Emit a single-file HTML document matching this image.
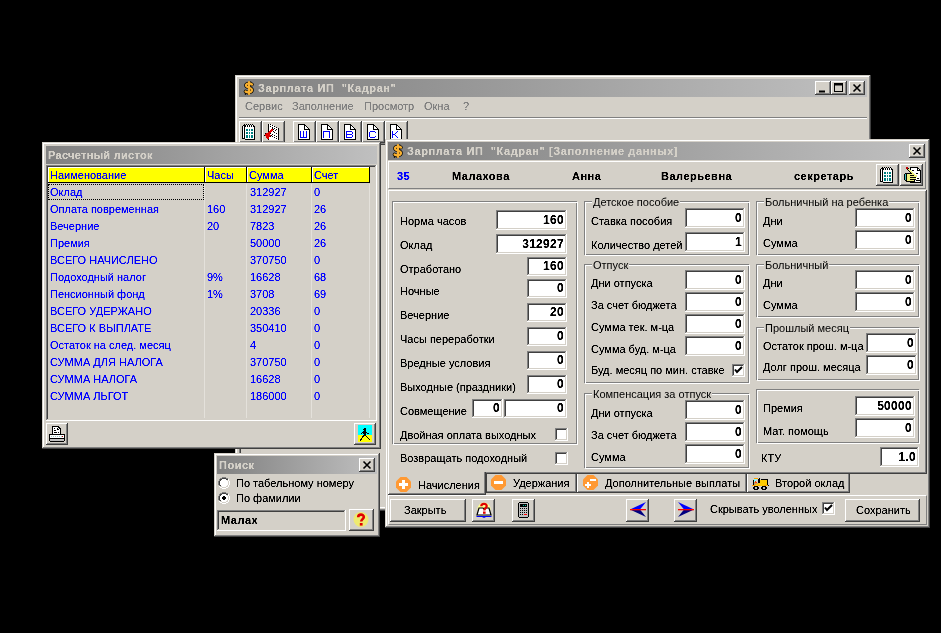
<!DOCTYPE html><html><head><meta charset="utf-8"><style>
*{margin:0;padding:0;box-sizing:border-box}
html,body{width:941px;height:633px;background:#000;overflow:hidden;position:relative}
body>div,body>svg{position:absolute}
.t,.tt{position:absolute;font-family:"Liberation Sans",sans-serif;font-size:11px;line-height:13px;white-space:nowrap;color:#000;filter:url(#crisp)}
.tt{font-weight:bold;color:#d4d0c8;letter-spacing:0.5px}
.blue{color:#0000ff}
.hb{color:#0000ff}
.win{background:#d4d0c8;box-shadow:inset -1px -1px #404040,inset 1px 1px #d4d0c8,inset -2px -2px #808080,inset 2px 2px #fff}
.dlg{background:#d4d0c8;box-shadow:inset -1px -1px #404040,inset 1px 1px #d4d0c8,inset -2px -2px #808080,inset 2px 2px #fff}
.title{background:linear-gradient(to right,#808080,#c0c0c0)}
.btn{background:#d4d0c8;box-shadow:inset -1px -1px #404040,inset 1px 1px #fff,inset -2px -2px #808080,inset 2px 2px #d4d0c8}
.edit{background:#fff;box-shadow:inset -1px -1px #fff,inset 1px 1px #808080,inset -2px -2px #d4d0c8,inset 2px 2px #404040}
.sunk{background:#d4d0c8;box-shadow:inset -1px -1px #fff,inset 1px 1px #808080,inset -2px -2px #d4d0c8,inset 2px 2px #404040}
.thin{border-top:1px solid #fff;border-left:1px solid #fff;border-right:1px solid #808080;border-bottom:1px solid #808080}
.tabp{box-shadow:inset -1px -1px #404040,inset 1px 1px #fff,inset -2px -2px #808080}
.tab{background:#d4d0c8;box-shadow:inset -1px -1px #404040,inset 1px 0 #fff,inset -2px -2px #808080}
.tabsel{background:#d4d0c8;box-shadow:inset -1px -1px #404040,inset 1px 0 #fff,inset -2px -2px #808080}
.grp1{border:1px solid #808080}
.grp2{border:1px solid #fff}
.hdr{background:#ffff00;box-shadow:inset -1px -1px #000,inset 1px 1px #fff}
.radio{width:12px;height:12px;border-radius:50%;background:#fff;box-shadow:inset 1px 1px #808080,inset -1px -1px #fff}
</style></head><body>
<svg width="0" height="0" style="position:absolute"><filter id="crisp"><feComponentTransfer><feFuncA type="linear" slope="2" intercept="-0.3"/></feComponentTransfer></filter></svg>
<div class="win" style="left:235px;top:75px;width:636px;height:436px"></div>
<div class="title" style="left:239px;top:79px;width:628px;height:18px"></div>
<svg style="left:241px;top:80px" width="16" height="16" viewBox="0 0 16 16"><path d="M9.5 1.5v2 M5 13.5 L4 14.5 M7 12.5v2" stroke="#000" stroke-width="1.6" fill="none"/><path d="M11 4.5 C9 3 5 3 5 5.5 C5 8 11 7 11 10 C11 12.5 6.5 13 4.5 11.5" stroke="#000" stroke-width="3.6" fill="none" stroke-linecap="round"/><path d="M11 4.5 C9 3 5 3 5 5.5 C5 8 11 7 11 10 C11 12.5 6.5 13 4.5 11.5 M8 2v12" stroke="#f8b030" stroke-width="2.2" fill="none" stroke-linecap="round"/></svg>
<div class="tt" style="left:258px;top:82px;letter-spacing:0.6px">Зарплата ИП&nbsp;&nbsp;"Кадран"</div>
<div class="btn" style="left:815px;top:81px;width:16px;height:14px"></div>
<svg style="left:815px;top:81px" width="16" height="14"><path d="M4 10.5h6" stroke="#000" stroke-width="2"/></svg>
<div class="btn" style="left:831px;top:81px;width:16px;height:14px"></div>
<svg style="left:831px;top:81px" width="16" height="14"><rect x="3.5" y="2.5" width="8" height="8" fill="none" stroke="#000"/><path d="M3 3.5h9" stroke="#000" stroke-width="2"/></svg>
<div class="btn" style="left:849px;top:81px;width:16px;height:14px"></div>
<svg style="left:849px;top:81px" width="16" height="14"><path d="M4.5 3.5 L11.5 10.5 M11.5 3.5 L4.5 10.5" stroke="#000" stroke-width="1.6"/></svg>
<div style="left:239px;top:143px;width:628px;height:365px;box-shadow:inset 1px 1px #808080,inset 2px 2px #404040,inset -1px -1px #fff,inset -2px -2px #d4d0c8"></div>
<div class="t" style="left:245px;top:100px;color:#808080">Сервис</div>
<div class="t" style="left:292px;top:100px;color:#808080">Заполнение</div>
<div class="t" style="left:364px;top:100px;color:#808080">Просмотр</div>
<div class="t" style="left:424px;top:100px;color:#808080">Окна</div>
<div class="t" style="left:463px;top:100px;color:#808080">?</div>
<div style="left:239px;top:117px;width:628px;height:1px;background:#808080"></div>
<div style="left:239px;top:118px;width:628px;height:1px;background:#fff"></div>
<div class="btn" style="left:239px;top:121px;width:23px;height:22px"></div>
<div class="btn" style="left:262px;top:121px;width:23px;height:22px"></div>
<div class="btn" style="left:293px;top:121px;width:23px;height:22px"></div>
<div class="btn" style="left:316px;top:121px;width:23px;height:22px"></div>
<div class="btn" style="left:339px;top:121px;width:23px;height:22px"></div>
<div class="btn" style="left:362px;top:121px;width:23px;height:22px"></div>
<div class="btn" style="left:385px;top:121px;width:23px;height:22px"></div>
<svg style="left:242px;top:124px" width="13" height="16" shape-rendering="crispEdges"><rect x="2" y="0" width="1" height="1" fill="#000"/><rect x="4" y="0" width="1" height="1" fill="#000"/><rect x="6" y="0" width="1" height="1" fill="#000"/><rect x="8" y="0" width="1" height="1" fill="#000"/><rect x="10" y="0" width="1" height="1" fill="#000"/><rect x="1" y="1" width="3" height="1" fill="#000"/><rect x="4" y="1" width="1" height="1" fill="#fff"/><rect x="5" y="1" width="1" height="1" fill="#000"/><rect x="6" y="1" width="1" height="1" fill="#fff"/><rect x="7" y="1" width="1" height="1" fill="#000"/><rect x="8" y="1" width="1" height="1" fill="#fff"/><rect x="9" y="1" width="1" height="1" fill="#000"/><rect x="10" y="1" width="1" height="1" fill="#fff"/><rect x="11" y="1" width="1" height="1" fill="#000"/><rect x="0" y="2" width="1" height="1" fill="#000"/><rect x="1" y="2" width="1" height="1" fill="#fff"/><rect x="2" y="2" width="2" height="1" fill="#000"/><rect x="4" y="2" width="1" height="1" fill="#fff"/><rect x="5" y="2" width="1" height="1" fill="#000"/><rect x="6" y="2" width="1" height="1" fill="#fff"/><rect x="7" y="2" width="1" height="1" fill="#000"/><rect x="8" y="2" width="1" height="1" fill="#fff"/><rect x="9" y="2" width="1" height="1" fill="#000"/><rect x="10" y="2" width="1" height="1" fill="#fff"/><rect x="11" y="2" width="2" height="1" fill="#000"/><rect x="0" y="3" width="1" height="1" fill="#000"/><rect x="1" y="3" width="1" height="1" fill="#fff"/><rect x="2" y="3" width="1" height="1" fill="#000"/><rect x="3" y="3" width="9" height="1" fill="#fff"/><rect x="12" y="3" width="1" height="1" fill="#000"/><rect x="0" y="4" width="1" height="1" fill="#000"/><rect x="1" y="4" width="1" height="1" fill="#fff"/><rect x="2" y="4" width="1" height="1" fill="#000"/><rect x="3" y="4" width="9" height="1" fill="#fff"/><rect x="12" y="4" width="1" height="1" fill="#000"/><rect x="0" y="5" width="1" height="1" fill="#000"/><rect x="1" y="5" width="1" height="1" fill="#fff"/><rect x="2" y="5" width="1" height="1" fill="#000"/><rect x="3" y="5" width="1" height="1" fill="#fff"/><rect x="4" y="5" width="2" height="1" fill="#008080"/><rect x="6" y="5" width="1" height="1" fill="#fff"/><rect x="7" y="5" width="1" height="1" fill="#008080"/><rect x="8" y="5" width="1" height="1" fill="#fff"/><rect x="9" y="5" width="2" height="1" fill="#008080"/><rect x="11" y="5" width="1" height="1" fill="#fff"/><rect x="12" y="5" width="1" height="1" fill="#000"/><rect x="0" y="6" width="1" height="1" fill="#000"/><rect x="1" y="6" width="1" height="1" fill="#fff"/><rect x="2" y="6" width="1" height="1" fill="#000"/><rect x="3" y="6" width="1" height="1" fill="#fff"/><rect x="4" y="6" width="2" height="1" fill="#008080"/><rect x="6" y="6" width="1" height="1" fill="#fff"/><rect x="7" y="6" width="1" height="1" fill="#008080"/><rect x="8" y="6" width="1" height="1" fill="#fff"/><rect x="9" y="6" width="2" height="1" fill="#008080"/><rect x="11" y="6" width="1" height="1" fill="#fff"/><rect x="12" y="6" width="1" height="1" fill="#000"/><rect x="0" y="7" width="1" height="1" fill="#000"/><rect x="1" y="7" width="1" height="1" fill="#fff"/><rect x="2" y="7" width="1" height="1" fill="#000"/><rect x="3" y="7" width="9" height="1" fill="#fff"/><rect x="12" y="7" width="1" height="1" fill="#000"/><rect x="0" y="8" width="1" height="1" fill="#000"/><rect x="1" y="8" width="1" height="1" fill="#fff"/><rect x="2" y="8" width="1" height="1" fill="#000"/><rect x="3" y="8" width="1" height="1" fill="#fff"/><rect x="4" y="8" width="2" height="1" fill="#008080"/><rect x="6" y="8" width="1" height="1" fill="#fff"/><rect x="7" y="8" width="1" height="1" fill="#008080"/><rect x="8" y="8" width="1" height="1" fill="#fff"/><rect x="9" y="8" width="2" height="1" fill="#008080"/><rect x="11" y="8" width="1" height="1" fill="#fff"/><rect x="12" y="8" width="1" height="1" fill="#000"/><rect x="0" y="9" width="1" height="1" fill="#000"/><rect x="1" y="9" width="1" height="1" fill="#fff"/><rect x="2" y="9" width="1" height="1" fill="#000"/><rect x="3" y="9" width="1" height="1" fill="#fff"/><rect x="4" y="9" width="2" height="1" fill="#008080"/><rect x="6" y="9" width="1" height="1" fill="#fff"/><rect x="7" y="9" width="1" height="1" fill="#008080"/><rect x="8" y="9" width="1" height="1" fill="#fff"/><rect x="9" y="9" width="2" height="1" fill="#008080"/><rect x="11" y="9" width="1" height="1" fill="#fff"/><rect x="12" y="9" width="1" height="1" fill="#000"/><rect x="0" y="10" width="1" height="1" fill="#000"/><rect x="1" y="10" width="1" height="1" fill="#fff"/><rect x="2" y="10" width="1" height="1" fill="#000"/><rect x="3" y="10" width="9" height="1" fill="#fff"/><rect x="12" y="10" width="1" height="1" fill="#000"/><rect x="0" y="11" width="1" height="1" fill="#000"/><rect x="1" y="11" width="1" height="1" fill="#fff"/><rect x="2" y="11" width="1" height="1" fill="#000"/><rect x="3" y="11" width="1" height="1" fill="#fff"/><rect x="4" y="11" width="2" height="1" fill="#008080"/><rect x="6" y="11" width="1" height="1" fill="#fff"/><rect x="7" y="11" width="1" height="1" fill="#008080"/><rect x="8" y="11" width="1" height="1" fill="#fff"/><rect x="9" y="11" width="2" height="1" fill="#008080"/><rect x="11" y="11" width="1" height="1" fill="#fff"/><rect x="12" y="11" width="1" height="1" fill="#000"/><rect x="0" y="12" width="1" height="1" fill="#000"/><rect x="1" y="12" width="1" height="1" fill="#fff"/><rect x="2" y="12" width="1" height="1" fill="#000"/><rect x="3" y="12" width="1" height="1" fill="#fff"/><rect x="4" y="12" width="2" height="1" fill="#008080"/><rect x="6" y="12" width="1" height="1" fill="#fff"/><rect x="7" y="12" width="1" height="1" fill="#008080"/><rect x="8" y="12" width="1" height="1" fill="#fff"/><rect x="9" y="12" width="2" height="1" fill="#008080"/><rect x="11" y="12" width="1" height="1" fill="#fff"/><rect x="12" y="12" width="1" height="1" fill="#000"/><rect x="0" y="13" width="1" height="1" fill="#000"/><rect x="1" y="13" width="1" height="1" fill="#fff"/><rect x="2" y="13" width="1" height="1" fill="#000"/><rect x="3" y="13" width="1" height="1" fill="#fff"/><rect x="4" y="13" width="2" height="1" fill="#008080"/><rect x="6" y="13" width="1" height="1" fill="#fff"/><rect x="7" y="13" width="1" height="1" fill="#008080"/><rect x="8" y="13" width="1" height="1" fill="#fff"/><rect x="9" y="13" width="2" height="1" fill="#008080"/><rect x="11" y="13" width="1" height="1" fill="#fff"/><rect x="12" y="13" width="1" height="1" fill="#000"/><rect x="0" y="14" width="3" height="1" fill="#000"/><rect x="3" y="14" width="9" height="1" fill="#fff"/><rect x="12" y="14" width="1" height="1" fill="#000"/><rect x="3" y="15" width="10" height="1" fill="#000"/></svg>
<svg style="left:263px;top:124px" width="17" height="16" shape-rendering="crispEdges"><path d="M6 0 L8 0 L15 4 L15 16 L6 16 Z" fill="#ffffff"/><rect x="5" y="0" width="1" height="10" fill="#000"/><rect x="15" y="4" width="1" height="12" fill="#000"/><rect x="7" y="0" width="1" height="1" fill="#000"/><rect x="9" y="1" width="1" height="1" fill="#000"/><rect x="11" y="2" width="1" height="1" fill="#000"/><rect x="13" y="3" width="1" height="1" fill="#000"/><rect x="7" y="2" width="1" height="1" fill="#000"/><rect x="9" y="3" width="1" height="1" fill="#000"/><rect x="11" y="4" width="1" height="1" fill="#000"/><rect x="13" y="5" width="1" height="1" fill="#000"/><rect x="8" y="5" width="1" height="1" fill="#000"/><rect x="11" y="8" width="1" height="1" fill="#000"/><rect x="13" y="9" width="1" height="1" fill="#000"/><rect x="9" y="10" width="1" height="1" fill="#000"/><rect x="11" y="11" width="1" height="1" fill="#000"/><rect x="13" y="12" width="1" height="1" fill="#000"/><rect x="9" y="12" width="1" height="1" fill="#000"/><rect x="11" y="13" width="1" height="1" fill="#000"/><rect x="13" y="14" width="1" height="1" fill="#000"/><rect x="10" y="7" width="1" height="1" fill="#000"/><rect x="12" y="6" width="1" height="1" fill="#000"/><rect x="8" y="5" width="2" height="1" fill="#e00000"/><rect x="7" y="6" width="3" height="1" fill="#e00000"/><rect x="6" y="7" width="3" height="1" fill="#e00000"/><rect x="5" y="8" width="3" height="1" fill="#e00000"/><rect x="3" y="9" width="5" height="1" fill="#e00000"/><rect x="2" y="10" width="5" height="1" fill="#e00000"/><rect x="2" y="11" width="6" height="1" fill="#e00000"/><rect x="3" y="12" width="4" height="1" fill="#e00000"/><rect x="3" y="13" width="3" height="1" fill="#e00000"/><rect x="4" y="14" width="2" height="1" fill="#e00000"/><rect x="9" y="4" width="1" height="1" fill="#000"/><rect x="10" y="5" width="1" height="1" fill="#000"/><rect x="2" y="9" width="1" height="1" fill="#000"/><rect x="1" y="11" width="1" height="1" fill="#000"/><rect x="5" y="15" width="1" height="1" fill="#000"/><rect x="7" y="12" width="1" height="1" fill="#000"/><rect x="8" y="11" width="1" height="1" fill="#000"/><rect x="7" y="9" width="1" height="1" fill="#000"/></svg>
<svg style="left:298px;top:124px" width="12" height="16" shape-rendering="crispEdges"><rect x="0" y="0" width="7" height="1" fill="#000"/><rect x="0" y="1" width="1" height="1" fill="#000"/><rect x="1" y="1" width="5" height="1" fill="#fff"/><rect x="6" y="1" width="2" height="1" fill="#000"/><rect x="0" y="2" width="1" height="1" fill="#000"/><rect x="1" y="2" width="5" height="1" fill="#fff"/><rect x="6" y="2" width="1" height="1" fill="#000"/><rect x="7" y="2" width="1" height="1" fill="#fff"/><rect x="8" y="2" width="1" height="1" fill="#000"/><rect x="0" y="3" width="1" height="1" fill="#000"/><rect x="1" y="3" width="5" height="1" fill="#fff"/><rect x="6" y="3" width="1" height="1" fill="#000"/><rect x="7" y="3" width="2" height="1" fill="#fff"/><rect x="9" y="3" width="1" height="1" fill="#000"/><rect x="0" y="4" width="1" height="1" fill="#000"/><rect x="1" y="4" width="5" height="1" fill="#fff"/><rect x="6" y="4" width="1" height="1" fill="#000"/><rect x="7" y="4" width="3" height="1" fill="#fff"/><rect x="10" y="4" width="1" height="1" fill="#000"/><rect x="0" y="5" width="1" height="1" fill="#000"/><rect x="1" y="5" width="5" height="1" fill="#fff"/><rect x="6" y="5" width="6" height="1" fill="#000"/><rect x="0" y="6" width="1" height="1" fill="#000"/><rect x="1" y="6" width="10" height="1" fill="#fff"/><rect x="11" y="6" width="1" height="1" fill="#000"/><rect x="0" y="7" width="1" height="1" fill="#000"/><rect x="1" y="7" width="1" height="1" fill="#fff"/><rect x="2" y="7" width="1" height="1" fill="#0000ff"/><rect x="3" y="7" width="2" height="1" fill="#fff"/><rect x="5" y="7" width="1" height="1" fill="#0000ff"/><rect x="6" y="7" width="2" height="1" fill="#fff"/><rect x="8" y="7" width="1" height="1" fill="#0000ff"/><rect x="9" y="7" width="2" height="1" fill="#fff"/><rect x="11" y="7" width="1" height="1" fill="#000"/><rect x="0" y="8" width="1" height="1" fill="#000"/><rect x="1" y="8" width="1" height="1" fill="#fff"/><rect x="2" y="8" width="1" height="1" fill="#0000ff"/><rect x="3" y="8" width="2" height="1" fill="#fff"/><rect x="5" y="8" width="1" height="1" fill="#0000ff"/><rect x="6" y="8" width="2" height="1" fill="#fff"/><rect x="8" y="8" width="1" height="1" fill="#0000ff"/><rect x="9" y="8" width="2" height="1" fill="#fff"/><rect x="11" y="8" width="1" height="1" fill="#000"/><rect x="0" y="9" width="1" height="1" fill="#000"/><rect x="1" y="9" width="1" height="1" fill="#fff"/><rect x="2" y="9" width="1" height="1" fill="#0000ff"/><rect x="3" y="9" width="2" height="1" fill="#fff"/><rect x="5" y="9" width="1" height="1" fill="#0000ff"/><rect x="6" y="9" width="2" height="1" fill="#fff"/><rect x="8" y="9" width="1" height="1" fill="#0000ff"/><rect x="9" y="9" width="2" height="1" fill="#fff"/><rect x="11" y="9" width="1" height="1" fill="#000"/><rect x="0" y="10" width="1" height="1" fill="#000"/><rect x="1" y="10" width="1" height="1" fill="#fff"/><rect x="2" y="10" width="1" height="1" fill="#0000ff"/><rect x="3" y="10" width="2" height="1" fill="#fff"/><rect x="5" y="10" width="1" height="1" fill="#0000ff"/><rect x="6" y="10" width="2" height="1" fill="#fff"/><rect x="8" y="10" width="1" height="1" fill="#0000ff"/><rect x="9" y="10" width="2" height="1" fill="#fff"/><rect x="11" y="10" width="1" height="1" fill="#000"/><rect x="0" y="11" width="1" height="1" fill="#000"/><rect x="1" y="11" width="1" height="1" fill="#fff"/><rect x="2" y="11" width="1" height="1" fill="#0000ff"/><rect x="3" y="11" width="2" height="1" fill="#fff"/><rect x="5" y="11" width="1" height="1" fill="#0000ff"/><rect x="6" y="11" width="2" height="1" fill="#fff"/><rect x="8" y="11" width="1" height="1" fill="#0000ff"/><rect x="9" y="11" width="2" height="1" fill="#fff"/><rect x="11" y="11" width="1" height="1" fill="#000"/><rect x="0" y="12" width="1" height="1" fill="#000"/><rect x="1" y="12" width="1" height="1" fill="#fff"/><rect x="2" y="12" width="1" height="1" fill="#0000ff"/><rect x="3" y="12" width="2" height="1" fill="#fff"/><rect x="5" y="12" width="1" height="1" fill="#0000ff"/><rect x="6" y="12" width="2" height="1" fill="#fff"/><rect x="8" y="12" width="1" height="1" fill="#0000ff"/><rect x="9" y="12" width="2" height="1" fill="#fff"/><rect x="11" y="12" width="1" height="1" fill="#000"/><rect x="0" y="13" width="1" height="1" fill="#000"/><rect x="1" y="13" width="1" height="1" fill="#fff"/><rect x="2" y="13" width="7" height="1" fill="#0000ff"/><rect x="9" y="13" width="2" height="1" fill="#fff"/><rect x="11" y="13" width="1" height="1" fill="#000"/><rect x="0" y="14" width="1" height="1" fill="#000"/><rect x="1" y="14" width="10" height="1" fill="#fff"/><rect x="11" y="14" width="1" height="1" fill="#000"/><rect x="0" y="15" width="12" height="1" fill="#000"/></svg>
<svg style="left:321px;top:124px" width="12" height="16" shape-rendering="crispEdges"><rect x="0" y="0" width="7" height="1" fill="#000"/><rect x="0" y="1" width="1" height="1" fill="#000"/><rect x="1" y="1" width="5" height="1" fill="#fff"/><rect x="6" y="1" width="2" height="1" fill="#000"/><rect x="0" y="2" width="1" height="1" fill="#000"/><rect x="1" y="2" width="5" height="1" fill="#fff"/><rect x="6" y="2" width="1" height="1" fill="#000"/><rect x="7" y="2" width="1" height="1" fill="#fff"/><rect x="8" y="2" width="1" height="1" fill="#000"/><rect x="0" y="3" width="1" height="1" fill="#000"/><rect x="1" y="3" width="5" height="1" fill="#fff"/><rect x="6" y="3" width="1" height="1" fill="#000"/><rect x="7" y="3" width="2" height="1" fill="#fff"/><rect x="9" y="3" width="1" height="1" fill="#000"/><rect x="0" y="4" width="1" height="1" fill="#000"/><rect x="1" y="4" width="5" height="1" fill="#fff"/><rect x="6" y="4" width="1" height="1" fill="#000"/><rect x="7" y="4" width="3" height="1" fill="#fff"/><rect x="10" y="4" width="1" height="1" fill="#000"/><rect x="0" y="5" width="1" height="1" fill="#000"/><rect x="1" y="5" width="5" height="1" fill="#fff"/><rect x="6" y="5" width="6" height="1" fill="#000"/><rect x="0" y="6" width="1" height="1" fill="#000"/><rect x="1" y="6" width="10" height="1" fill="#fff"/><rect x="11" y="6" width="1" height="1" fill="#000"/><rect x="0" y="7" width="1" height="1" fill="#000"/><rect x="1" y="7" width="1" height="1" fill="#fff"/><rect x="2" y="7" width="7" height="1" fill="#0000ff"/><rect x="9" y="7" width="2" height="1" fill="#fff"/><rect x="11" y="7" width="1" height="1" fill="#000"/><rect x="0" y="8" width="1" height="1" fill="#000"/><rect x="1" y="8" width="1" height="1" fill="#fff"/><rect x="2" y="8" width="1" height="1" fill="#0000ff"/><rect x="3" y="8" width="5" height="1" fill="#fff"/><rect x="8" y="8" width="1" height="1" fill="#0000ff"/><rect x="9" y="8" width="2" height="1" fill="#fff"/><rect x="11" y="8" width="1" height="1" fill="#000"/><rect x="0" y="9" width="1" height="1" fill="#000"/><rect x="1" y="9" width="1" height="1" fill="#fff"/><rect x="2" y="9" width="1" height="1" fill="#0000ff"/><rect x="3" y="9" width="5" height="1" fill="#fff"/><rect x="8" y="9" width="1" height="1" fill="#0000ff"/><rect x="9" y="9" width="2" height="1" fill="#fff"/><rect x="11" y="9" width="1" height="1" fill="#000"/><rect x="0" y="10" width="1" height="1" fill="#000"/><rect x="1" y="10" width="1" height="1" fill="#fff"/><rect x="2" y="10" width="1" height="1" fill="#0000ff"/><rect x="3" y="10" width="5" height="1" fill="#fff"/><rect x="8" y="10" width="1" height="1" fill="#0000ff"/><rect x="9" y="10" width="2" height="1" fill="#fff"/><rect x="11" y="10" width="1" height="1" fill="#000"/><rect x="0" y="11" width="1" height="1" fill="#000"/><rect x="1" y="11" width="1" height="1" fill="#fff"/><rect x="2" y="11" width="1" height="1" fill="#0000ff"/><rect x="3" y="11" width="5" height="1" fill="#fff"/><rect x="8" y="11" width="1" height="1" fill="#0000ff"/><rect x="9" y="11" width="2" height="1" fill="#fff"/><rect x="11" y="11" width="1" height="1" fill="#000"/><rect x="0" y="12" width="1" height="1" fill="#000"/><rect x="1" y="12" width="1" height="1" fill="#fff"/><rect x="2" y="12" width="1" height="1" fill="#0000ff"/><rect x="3" y="12" width="5" height="1" fill="#fff"/><rect x="8" y="12" width="1" height="1" fill="#0000ff"/><rect x="9" y="12" width="2" height="1" fill="#fff"/><rect x="11" y="12" width="1" height="1" fill="#000"/><rect x="0" y="13" width="1" height="1" fill="#000"/><rect x="1" y="13" width="1" height="1" fill="#fff"/><rect x="2" y="13" width="1" height="1" fill="#0000ff"/><rect x="3" y="13" width="5" height="1" fill="#fff"/><rect x="8" y="13" width="1" height="1" fill="#0000ff"/><rect x="9" y="13" width="2" height="1" fill="#fff"/><rect x="11" y="13" width="1" height="1" fill="#000"/><rect x="0" y="14" width="1" height="1" fill="#000"/><rect x="1" y="14" width="10" height="1" fill="#fff"/><rect x="11" y="14" width="1" height="1" fill="#000"/><rect x="0" y="15" width="12" height="1" fill="#000"/></svg>
<svg style="left:344px;top:124px" width="12" height="16" shape-rendering="crispEdges"><rect x="0" y="0" width="7" height="1" fill="#000"/><rect x="0" y="1" width="1" height="1" fill="#000"/><rect x="1" y="1" width="5" height="1" fill="#fff"/><rect x="6" y="1" width="2" height="1" fill="#000"/><rect x="0" y="2" width="1" height="1" fill="#000"/><rect x="1" y="2" width="5" height="1" fill="#fff"/><rect x="6" y="2" width="1" height="1" fill="#000"/><rect x="7" y="2" width="1" height="1" fill="#fff"/><rect x="8" y="2" width="1" height="1" fill="#000"/><rect x="0" y="3" width="1" height="1" fill="#000"/><rect x="1" y="3" width="5" height="1" fill="#fff"/><rect x="6" y="3" width="1" height="1" fill="#000"/><rect x="7" y="3" width="2" height="1" fill="#fff"/><rect x="9" y="3" width="1" height="1" fill="#000"/><rect x="0" y="4" width="1" height="1" fill="#000"/><rect x="1" y="4" width="5" height="1" fill="#fff"/><rect x="6" y="4" width="1" height="1" fill="#000"/><rect x="7" y="4" width="3" height="1" fill="#fff"/><rect x="10" y="4" width="1" height="1" fill="#000"/><rect x="0" y="5" width="1" height="1" fill="#000"/><rect x="1" y="5" width="5" height="1" fill="#fff"/><rect x="6" y="5" width="6" height="1" fill="#000"/><rect x="0" y="6" width="1" height="1" fill="#000"/><rect x="1" y="6" width="10" height="1" fill="#fff"/><rect x="11" y="6" width="1" height="1" fill="#000"/><rect x="0" y="7" width="1" height="1" fill="#000"/><rect x="1" y="7" width="1" height="1" fill="#fff"/><rect x="2" y="7" width="6" height="1" fill="#0000ff"/><rect x="8" y="7" width="3" height="1" fill="#fff"/><rect x="11" y="7" width="1" height="1" fill="#000"/><rect x="0" y="8" width="1" height="1" fill="#000"/><rect x="1" y="8" width="1" height="1" fill="#fff"/><rect x="2" y="8" width="1" height="1" fill="#0000ff"/><rect x="3" y="8" width="5" height="1" fill="#fff"/><rect x="8" y="8" width="1" height="1" fill="#0000ff"/><rect x="9" y="8" width="2" height="1" fill="#fff"/><rect x="11" y="8" width="1" height="1" fill="#000"/><rect x="0" y="9" width="1" height="1" fill="#000"/><rect x="1" y="9" width="1" height="1" fill="#fff"/><rect x="2" y="9" width="1" height="1" fill="#0000ff"/><rect x="3" y="9" width="5" height="1" fill="#fff"/><rect x="8" y="9" width="1" height="1" fill="#0000ff"/><rect x="9" y="9" width="2" height="1" fill="#fff"/><rect x="11" y="9" width="1" height="1" fill="#000"/><rect x="0" y="10" width="1" height="1" fill="#000"/><rect x="1" y="10" width="1" height="1" fill="#fff"/><rect x="2" y="10" width="6" height="1" fill="#0000ff"/><rect x="8" y="10" width="3" height="1" fill="#fff"/><rect x="11" y="10" width="1" height="1" fill="#000"/><rect x="0" y="11" width="1" height="1" fill="#000"/><rect x="1" y="11" width="1" height="1" fill="#fff"/><rect x="2" y="11" width="1" height="1" fill="#0000ff"/><rect x="3" y="11" width="5" height="1" fill="#fff"/><rect x="8" y="11" width="1" height="1" fill="#0000ff"/><rect x="9" y="11" width="2" height="1" fill="#fff"/><rect x="11" y="11" width="1" height="1" fill="#000"/><rect x="0" y="12" width="1" height="1" fill="#000"/><rect x="1" y="12" width="1" height="1" fill="#fff"/><rect x="2" y="12" width="1" height="1" fill="#0000ff"/><rect x="3" y="12" width="5" height="1" fill="#fff"/><rect x="8" y="12" width="1" height="1" fill="#0000ff"/><rect x="9" y="12" width="2" height="1" fill="#fff"/><rect x="11" y="12" width="1" height="1" fill="#000"/><rect x="0" y="13" width="1" height="1" fill="#000"/><rect x="1" y="13" width="1" height="1" fill="#fff"/><rect x="2" y="13" width="6" height="1" fill="#0000ff"/><rect x="8" y="13" width="3" height="1" fill="#fff"/><rect x="11" y="13" width="1" height="1" fill="#000"/><rect x="0" y="14" width="1" height="1" fill="#000"/><rect x="1" y="14" width="10" height="1" fill="#fff"/><rect x="11" y="14" width="1" height="1" fill="#000"/><rect x="0" y="15" width="12" height="1" fill="#000"/></svg>
<svg style="left:367px;top:124px" width="12" height="16" shape-rendering="crispEdges"><rect x="0" y="0" width="7" height="1" fill="#000"/><rect x="0" y="1" width="1" height="1" fill="#000"/><rect x="1" y="1" width="5" height="1" fill="#fff"/><rect x="6" y="1" width="2" height="1" fill="#000"/><rect x="0" y="2" width="1" height="1" fill="#000"/><rect x="1" y="2" width="5" height="1" fill="#fff"/><rect x="6" y="2" width="1" height="1" fill="#000"/><rect x="7" y="2" width="1" height="1" fill="#fff"/><rect x="8" y="2" width="1" height="1" fill="#000"/><rect x="0" y="3" width="1" height="1" fill="#000"/><rect x="1" y="3" width="5" height="1" fill="#fff"/><rect x="6" y="3" width="1" height="1" fill="#000"/><rect x="7" y="3" width="2" height="1" fill="#fff"/><rect x="9" y="3" width="1" height="1" fill="#000"/><rect x="0" y="4" width="1" height="1" fill="#000"/><rect x="1" y="4" width="5" height="1" fill="#fff"/><rect x="6" y="4" width="1" height="1" fill="#000"/><rect x="7" y="4" width="3" height="1" fill="#fff"/><rect x="10" y="4" width="1" height="1" fill="#000"/><rect x="0" y="5" width="1" height="1" fill="#000"/><rect x="1" y="5" width="5" height="1" fill="#fff"/><rect x="6" y="5" width="6" height="1" fill="#000"/><rect x="0" y="6" width="1" height="1" fill="#000"/><rect x="1" y="6" width="10" height="1" fill="#fff"/><rect x="11" y="6" width="1" height="1" fill="#000"/><rect x="0" y="7" width="1" height="1" fill="#000"/><rect x="1" y="7" width="2" height="1" fill="#fff"/><rect x="3" y="7" width="5" height="1" fill="#0000ff"/><rect x="8" y="7" width="3" height="1" fill="#fff"/><rect x="11" y="7" width="1" height="1" fill="#000"/><rect x="0" y="8" width="1" height="1" fill="#000"/><rect x="1" y="8" width="1" height="1" fill="#fff"/><rect x="2" y="8" width="1" height="1" fill="#0000ff"/><rect x="3" y="8" width="5" height="1" fill="#fff"/><rect x="8" y="8" width="1" height="1" fill="#0000ff"/><rect x="9" y="8" width="2" height="1" fill="#fff"/><rect x="11" y="8" width="1" height="1" fill="#000"/><rect x="0" y="9" width="1" height="1" fill="#000"/><rect x="1" y="9" width="1" height="1" fill="#fff"/><rect x="2" y="9" width="1" height="1" fill="#0000ff"/><rect x="3" y="9" width="8" height="1" fill="#fff"/><rect x="11" y="9" width="1" height="1" fill="#000"/><rect x="0" y="10" width="1" height="1" fill="#000"/><rect x="1" y="10" width="1" height="1" fill="#fff"/><rect x="2" y="10" width="1" height="1" fill="#0000ff"/><rect x="3" y="10" width="8" height="1" fill="#fff"/><rect x="11" y="10" width="1" height="1" fill="#000"/><rect x="0" y="11" width="1" height="1" fill="#000"/><rect x="1" y="11" width="1" height="1" fill="#fff"/><rect x="2" y="11" width="1" height="1" fill="#0000ff"/><rect x="3" y="11" width="8" height="1" fill="#fff"/><rect x="11" y="11" width="1" height="1" fill="#000"/><rect x="0" y="12" width="1" height="1" fill="#000"/><rect x="1" y="12" width="1" height="1" fill="#fff"/><rect x="2" y="12" width="1" height="1" fill="#0000ff"/><rect x="3" y="12" width="5" height="1" fill="#fff"/><rect x="8" y="12" width="1" height="1" fill="#0000ff"/><rect x="9" y="12" width="2" height="1" fill="#fff"/><rect x="11" y="12" width="1" height="1" fill="#000"/><rect x="0" y="13" width="1" height="1" fill="#000"/><rect x="1" y="13" width="2" height="1" fill="#fff"/><rect x="3" y="13" width="5" height="1" fill="#0000ff"/><rect x="8" y="13" width="3" height="1" fill="#fff"/><rect x="11" y="13" width="1" height="1" fill="#000"/><rect x="0" y="14" width="1" height="1" fill="#000"/><rect x="1" y="14" width="10" height="1" fill="#fff"/><rect x="11" y="14" width="1" height="1" fill="#000"/><rect x="0" y="15" width="12" height="1" fill="#000"/></svg>
<svg style="left:390px;top:124px" width="12" height="16" shape-rendering="crispEdges"><rect x="0" y="0" width="7" height="1" fill="#000"/><rect x="0" y="1" width="1" height="1" fill="#000"/><rect x="1" y="1" width="5" height="1" fill="#fff"/><rect x="6" y="1" width="2" height="1" fill="#000"/><rect x="0" y="2" width="1" height="1" fill="#000"/><rect x="1" y="2" width="5" height="1" fill="#fff"/><rect x="6" y="2" width="1" height="1" fill="#000"/><rect x="7" y="2" width="1" height="1" fill="#fff"/><rect x="8" y="2" width="1" height="1" fill="#000"/><rect x="0" y="3" width="1" height="1" fill="#000"/><rect x="1" y="3" width="5" height="1" fill="#fff"/><rect x="6" y="3" width="1" height="1" fill="#000"/><rect x="7" y="3" width="2" height="1" fill="#fff"/><rect x="9" y="3" width="1" height="1" fill="#000"/><rect x="0" y="4" width="1" height="1" fill="#000"/><rect x="1" y="4" width="5" height="1" fill="#fff"/><rect x="6" y="4" width="1" height="1" fill="#000"/><rect x="7" y="4" width="3" height="1" fill="#fff"/><rect x="10" y="4" width="1" height="1" fill="#000"/><rect x="0" y="5" width="1" height="1" fill="#000"/><rect x="1" y="5" width="5" height="1" fill="#fff"/><rect x="6" y="5" width="6" height="1" fill="#000"/><rect x="0" y="6" width="1" height="1" fill="#000"/><rect x="1" y="6" width="10" height="1" fill="#fff"/><rect x="11" y="6" width="1" height="1" fill="#000"/><rect x="0" y="7" width="1" height="1" fill="#000"/><rect x="1" y="7" width="1" height="1" fill="#fff"/><rect x="2" y="7" width="1" height="1" fill="#0000ff"/><rect x="3" y="7" width="4" height="1" fill="#fff"/><rect x="7" y="7" width="1" height="1" fill="#0000ff"/><rect x="8" y="7" width="3" height="1" fill="#fff"/><rect x="11" y="7" width="1" height="1" fill="#000"/><rect x="0" y="8" width="1" height="1" fill="#000"/><rect x="1" y="8" width="1" height="1" fill="#fff"/><rect x="2" y="8" width="1" height="1" fill="#0000ff"/><rect x="3" y="8" width="3" height="1" fill="#fff"/><rect x="6" y="8" width="1" height="1" fill="#0000ff"/><rect x="7" y="8" width="4" height="1" fill="#fff"/><rect x="11" y="8" width="1" height="1" fill="#000"/><rect x="0" y="9" width="1" height="1" fill="#000"/><rect x="1" y="9" width="1" height="1" fill="#fff"/><rect x="2" y="9" width="1" height="1" fill="#0000ff"/><rect x="3" y="9" width="2" height="1" fill="#fff"/><rect x="5" y="9" width="1" height="1" fill="#0000ff"/><rect x="6" y="9" width="5" height="1" fill="#fff"/><rect x="11" y="9" width="1" height="1" fill="#000"/><rect x="0" y="10" width="1" height="1" fill="#000"/><rect x="1" y="10" width="1" height="1" fill="#fff"/><rect x="2" y="10" width="3" height="1" fill="#0000ff"/><rect x="5" y="10" width="6" height="1" fill="#fff"/><rect x="11" y="10" width="1" height="1" fill="#000"/><rect x="0" y="11" width="1" height="1" fill="#000"/><rect x="1" y="11" width="1" height="1" fill="#fff"/><rect x="2" y="11" width="1" height="1" fill="#0000ff"/><rect x="3" y="11" width="2" height="1" fill="#fff"/><rect x="5" y="11" width="1" height="1" fill="#0000ff"/><rect x="6" y="11" width="5" height="1" fill="#fff"/><rect x="11" y="11" width="1" height="1" fill="#000"/><rect x="0" y="12" width="1" height="1" fill="#000"/><rect x="1" y="12" width="1" height="1" fill="#fff"/><rect x="2" y="12" width="1" height="1" fill="#0000ff"/><rect x="3" y="12" width="3" height="1" fill="#fff"/><rect x="6" y="12" width="1" height="1" fill="#0000ff"/><rect x="7" y="12" width="4" height="1" fill="#fff"/><rect x="11" y="12" width="1" height="1" fill="#000"/><rect x="0" y="13" width="1" height="1" fill="#000"/><rect x="1" y="13" width="1" height="1" fill="#fff"/><rect x="2" y="13" width="1" height="1" fill="#0000ff"/><rect x="3" y="13" width="4" height="1" fill="#fff"/><rect x="7" y="13" width="1" height="1" fill="#0000ff"/><rect x="8" y="13" width="3" height="1" fill="#fff"/><rect x="11" y="13" width="1" height="1" fill="#000"/><rect x="0" y="14" width="1" height="1" fill="#000"/><rect x="1" y="14" width="10" height="1" fill="#fff"/><rect x="11" y="14" width="1" height="1" fill="#000"/><rect x="0" y="15" width="12" height="1" fill="#000"/></svg>
<div class="win" style="left:42px;top:142px;width:339px;height:307px"></div>
<div class="title" style="left:46px;top:146px;width:331px;height:18px"></div>
<div class="tt" style="left:48px;top:149px;letter-spacing:0.3px">Расчетный листок</div>
<div class="sunk" style="left:46px;top:165px;width:331px;height:256px"></div>
<div class="hdr" style="left:48px;top:167px;width:157px;height:16px"></div>
<div class="t hb" style="left:50px;top:169px">Наименование</div>
<div class="hdr" style="left:205px;top:167px;width:42px;height:16px"></div>
<div class="t hb" style="left:207px;top:169px">Часы</div>
<div class="hdr" style="left:247px;top:167px;width:65px;height:16px"></div>
<div class="t hb" style="left:249px;top:169px">Сумма</div>
<div class="hdr" style="left:312px;top:167px;width:58px;height:16px"></div>
<div class="t hb" style="left:314px;top:169px">Счет</div>
<div style="left:204px;top:184px;width:1px;height:234px;background:#e4e1db"></div>
<div style="left:246px;top:184px;width:1px;height:234px;background:#e4e1db"></div>
<div style="left:311px;top:184px;width:1px;height:234px;background:#e4e1db"></div>
<div style="left:369px;top:184px;width:1px;height:234px;background:#e4e1db"></div>
<div class="t blue" style="left:50px;top:186px">Оклад</div>
<div class="t blue" style="left:250px;top:186px">312927</div>
<div class="t blue" style="left:314px;top:186px">0</div>
<div class="t blue" style="left:50px;top:203px">Оплата повременная</div>
<div class="t blue" style="left:207px;top:203px">160</div>
<div class="t blue" style="left:250px;top:203px">312927</div>
<div class="t blue" style="left:314px;top:203px">26</div>
<div class="t blue" style="left:50px;top:220px">Вечерние</div>
<div class="t blue" style="left:207px;top:220px">20</div>
<div class="t blue" style="left:250px;top:220px">7823</div>
<div class="t blue" style="left:314px;top:220px">26</div>
<div class="t blue" style="left:50px;top:237px">Премия</div>
<div class="t blue" style="left:250px;top:237px">50000</div>
<div class="t blue" style="left:314px;top:237px">26</div>
<div class="t blue" style="left:50px;top:254px">ВСЕГО НАЧИСЛЕНО</div>
<div class="t blue" style="left:250px;top:254px">370750</div>
<div class="t blue" style="left:314px;top:254px">0</div>
<div class="t blue" style="left:50px;top:271px">Подоходный налог</div>
<div class="t blue" style="left:207px;top:271px">9%</div>
<div class="t blue" style="left:250px;top:271px">16628</div>
<div class="t blue" style="left:314px;top:271px">68</div>
<div class="t blue" style="left:50px;top:288px">Пенсионный фонд</div>
<div class="t blue" style="left:207px;top:288px">1%</div>
<div class="t blue" style="left:250px;top:288px">3708</div>
<div class="t blue" style="left:314px;top:288px">69</div>
<div class="t blue" style="left:50px;top:305px">ВСЕГО УДЕРЖАНО</div>
<div class="t blue" style="left:250px;top:305px">20336</div>
<div class="t blue" style="left:314px;top:305px">0</div>
<div class="t blue" style="left:50px;top:322px">ВСЕГО К ВЫПЛАТЕ</div>
<div class="t blue" style="left:250px;top:322px">350410</div>
<div class="t blue" style="left:314px;top:322px">0</div>
<div class="t blue" style="left:50px;top:339px">Остаток на след. месяц</div>
<div class="t blue" style="left:250px;top:339px">4</div>
<div class="t blue" style="left:314px;top:339px">0</div>
<div class="t blue" style="left:50px;top:356px">СУММА ДЛЯ НАЛОГА</div>
<div class="t blue" style="left:250px;top:356px">370750</div>
<div class="t blue" style="left:314px;top:356px">0</div>
<div class="t blue" style="left:50px;top:373px">СУММА НАЛОГА</div>
<div class="t blue" style="left:250px;top:373px">16628</div>
<div class="t blue" style="left:314px;top:373px">0</div>
<div class="t blue" style="left:50px;top:390px">СУММА ЛЬГОТ</div>
<div class="t blue" style="left:250px;top:390px">186000</div>
<div class="t blue" style="left:314px;top:390px">0</div>
<div style="left:48px;top:184px;width:156px;height:16px;border:1px dotted #000"></div>
<div class="btn" style="left:46px;top:423px;width:22px;height:22px"></div>
<div class="btn" style="left:354px;top:423px;width:22px;height:22px"></div>
<svg style="left:49px;top:426px" width="16" height="16" shape-rendering="crispEdges"><rect x="3" y="0" width="7" height="1" fill="#000"/><rect x="3" y="1" width="1" height="1" fill="#000"/><rect x="4" y="1" width="5" height="1" fill="#fff"/><rect x="9" y="1" width="2" height="1" fill="#000"/><rect x="3" y="2" width="1" height="1" fill="#000"/><rect x="4" y="2" width="1" height="1" fill="#fff"/><rect x="5" y="2" width="1" height="1" fill="#000"/><rect x="6" y="2" width="2" height="1" fill="#fff"/><rect x="8" y="2" width="1" height="1" fill="#000"/><rect x="9" y="2" width="1" height="1" fill="#fff"/><rect x="10" y="2" width="2" height="1" fill="#000"/><rect x="3" y="3" width="1" height="1" fill="#000"/><rect x="4" y="3" width="4" height="1" fill="#fff"/><rect x="8" y="3" width="2" height="1" fill="#000"/><rect x="10" y="3" width="1" height="1" fill="#fff"/><rect x="11" y="3" width="1" height="1" fill="#000"/><rect x="3" y="4" width="1" height="1" fill="#000"/><rect x="4" y="4" width="1" height="1" fill="#fff"/><rect x="5" y="4" width="2" height="1" fill="#000"/><rect x="7" y="4" width="4" height="1" fill="#fff"/><rect x="11" y="4" width="1" height="1" fill="#000"/><rect x="3" y="5" width="1" height="1" fill="#000"/><rect x="4" y="5" width="7" height="1" fill="#fff"/><rect x="11" y="5" width="1" height="1" fill="#000"/><rect x="3" y="6" width="1" height="1" fill="#000"/><rect x="4" y="6" width="1" height="1" fill="#fff"/><rect x="5" y="6" width="3" height="1" fill="#000"/><rect x="8" y="6" width="1" height="1" fill="#fff"/><rect x="9" y="6" width="1" height="1" fill="#000"/><rect x="10" y="6" width="1" height="1" fill="#fff"/><rect x="11" y="6" width="1" height="1" fill="#000"/><rect x="3" y="7" width="1" height="1" fill="#000"/><rect x="4" y="7" width="7" height="1" fill="#fff"/><rect x="11" y="7" width="1" height="1" fill="#000"/><rect x="0" y="8" width="16" height="1" fill="#000"/><rect x="0" y="9" width="1" height="1" fill="#000"/><rect x="1" y="9" width="14" height="1" fill="#fff"/><rect x="15" y="9" width="1" height="1" fill="#000"/><rect x="0" y="10" width="1" height="1" fill="#000"/><rect x="1" y="10" width="1" height="1" fill="#fff"/><rect x="2" y="10" width="1" height="1" fill="#a0c8c8"/><rect x="3" y="10" width="1" height="1" fill="#fff"/><rect x="4" y="10" width="1" height="1" fill="#a0c8c8"/><rect x="5" y="10" width="1" height="1" fill="#fff"/><rect x="6" y="10" width="1" height="1" fill="#a0c8c8"/><rect x="7" y="10" width="1" height="1" fill="#fff"/><rect x="8" y="10" width="1" height="1" fill="#a0c8c8"/><rect x="9" y="10" width="1" height="1" fill="#fff"/><rect x="10" y="10" width="1" height="1" fill="#a0c8c8"/><rect x="11" y="10" width="1" height="1" fill="#fff"/><rect x="12" y="10" width="1" height="1" fill="#a0c8c8"/><rect x="13" y="10" width="1" height="1" fill="#c00000"/><rect x="14" y="10" width="1" height="1" fill="#fff"/><rect x="15" y="10" width="1" height="1" fill="#000"/><rect x="0" y="11" width="1" height="1" fill="#000"/><rect x="1" y="11" width="14" height="1" fill="#fff"/><rect x="15" y="11" width="1" height="1" fill="#000"/><rect x="0" y="12" width="16" height="1" fill="#000"/><rect x="0" y="13" width="1" height="1" fill="#000"/><rect x="1" y="13" width="14" height="1" fill="#c0c0c0"/><rect x="15" y="13" width="1" height="1" fill="#000"/><rect x="0" y="14" width="1" height="1" fill="#000"/><rect x="1" y="14" width="14" height="1" fill="#c0c0c0"/><rect x="15" y="14" width="1" height="1" fill="#000"/><rect x="1" y="15" width="14" height="1" fill="#000"/></svg>
<svg style="left:358px;top:425px" width="14" height="17" shape-rendering="crispEdges"><rect x="0" y="0" width="14" height="10" fill="#00ffff"/><rect x="0" y="10" width="14" height="7" fill="#ffff00"/><rect x="6" y="3" width="1" height="1" fill="#000"/><rect x="7" y="3" width="1" height="1" fill="#000"/><rect x="5" y="4" width="1" height="1" fill="#000"/><rect x="6" y="4" width="1" height="1" fill="#000"/><rect x="7" y="4" width="1" height="1" fill="#000"/><rect x="6" y="5" width="1" height="1" fill="#000"/><rect x="7" y="5" width="1" height="1" fill="#000"/><rect x="5" y="6" width="1" height="1" fill="#000"/><rect x="6" y="6" width="1" height="1" fill="#000"/><rect x="7" y="6" width="1" height="1" fill="#000"/><rect x="4" y="7" width="1" height="1" fill="#000"/><rect x="5" y="7" width="1" height="1" fill="#000"/><rect x="6" y="7" width="1" height="1" fill="#000"/><rect x="7" y="7" width="1" height="1" fill="#000"/><rect x="8" y="7" width="1" height="1" fill="#000"/><rect x="3" y="8" width="1" height="1" fill="#000"/><rect x="5" y="8" width="1" height="1" fill="#000"/><rect x="6" y="8" width="1" height="1" fill="#000"/><rect x="7" y="8" width="1" height="1" fill="#000"/><rect x="9" y="8" width="1" height="1" fill="#000"/><rect x="10" y="8" width="1" height="1" fill="#000"/><rect x="6" y="9" width="1" height="1" fill="#000"/><rect x="7" y="9" width="1" height="1" fill="#000"/><rect x="5" y="10" width="1" height="1" fill="#000"/><rect x="6" y="10" width="1" height="1" fill="#000"/><rect x="7" y="10" width="1" height="1" fill="#000"/><rect x="4" y="11" width="1" height="1" fill="#000"/><rect x="5" y="11" width="1" height="1" fill="#000"/><rect x="8" y="11" width="1" height="1" fill="#000"/><rect x="4" y="12" width="1" height="1" fill="#000"/><rect x="9" y="12" width="1" height="1" fill="#000"/><rect x="3" y="13" width="1" height="1" fill="#000"/><rect x="10" y="13" width="1" height="1" fill="#000"/><rect x="2" y="14" width="1" height="1" fill="#000"/><rect x="3" y="14" width="1" height="1" fill="#000"/><rect x="11" y="14" width="1" height="1" fill="#000"/><rect x="2" y="15" width="1" height="1" fill="#000"/></svg>
<div class="win" style="left:214px;top:453px;width:166px;height:84px"></div>
<div class="title" style="left:217px;top:456px;width:160px;height:18px"></div>
<div class="tt" style="left:219px;top:459px;letter-spacing:0.5px">Поиск</div>
<div class="btn" style="left:359px;top:458px;width:16px;height:14px"></div>
<svg style="left:359px;top:458px" width="16" height="14"><path d="M4.5 3.5 L11.5 10.5 M11.5 3.5 L4.5 10.5" stroke="#000" stroke-width="1.6"/></svg>
<svg style="left:218px;top:477px" width="12" height="12" shape-rendering="crispEdges"><rect x="4" y="0" width="4" height="1" fill="#808080"/><rect x="2" y="1" width="2" height="1" fill="#808080"/><rect x="4" y="1" width="4" height="1" fill="#404040"/><rect x="8" y="1" width="2" height="1" fill="#808080"/><rect x="1" y="2" width="1" height="1" fill="#808080"/><rect x="2" y="2" width="2" height="1" fill="#404040"/><rect x="4" y="2" width="4" height="1" fill="#fff"/><rect x="8" y="2" width="2" height="1" fill="#404040"/><rect x="10" y="2" width="1" height="1" fill="#fff"/><rect x="1" y="3" width="1" height="1" fill="#808080"/><rect x="2" y="3" width="1" height="1" fill="#404040"/><rect x="3" y="3" width="6" height="1" fill="#fff"/><rect x="9" y="3" width="1" height="1" fill="#d4d0c8"/><rect x="10" y="3" width="1" height="1" fill="#fff"/><rect x="0" y="4" width="1" height="1" fill="#808080"/><rect x="1" y="4" width="1" height="1" fill="#404040"/><rect x="2" y="4" width="8" height="1" fill="#fff"/><rect x="10" y="4" width="1" height="1" fill="#d4d0c8"/><rect x="11" y="4" width="1" height="1" fill="#fff"/><rect x="0" y="5" width="1" height="1" fill="#808080"/><rect x="1" y="5" width="1" height="1" fill="#404040"/><rect x="2" y="5" width="8" height="1" fill="#fff"/><rect x="10" y="5" width="1" height="1" fill="#d4d0c8"/><rect x="11" y="5" width="1" height="1" fill="#fff"/><rect x="0" y="6" width="1" height="1" fill="#808080"/><rect x="1" y="6" width="1" height="1" fill="#404040"/><rect x="2" y="6" width="8" height="1" fill="#fff"/><rect x="10" y="6" width="1" height="1" fill="#d4d0c8"/><rect x="11" y="6" width="1" height="1" fill="#fff"/><rect x="0" y="7" width="1" height="1" fill="#808080"/><rect x="1" y="7" width="1" height="1" fill="#404040"/><rect x="2" y="7" width="8" height="1" fill="#fff"/><rect x="10" y="7" width="1" height="1" fill="#d4d0c8"/><rect x="11" y="7" width="1" height="1" fill="#fff"/><rect x="1" y="8" width="1" height="1" fill="#808080"/><rect x="2" y="8" width="1" height="1" fill="#404040"/><rect x="3" y="8" width="6" height="1" fill="#fff"/><rect x="9" y="8" width="1" height="1" fill="#d4d0c8"/><rect x="10" y="8" width="1" height="1" fill="#fff"/><rect x="1" y="9" width="1" height="1" fill="#fff"/><rect x="2" y="9" width="2" height="1" fill="#d4d0c8"/><rect x="4" y="9" width="4" height="1" fill="#fff"/><rect x="8" y="9" width="2" height="1" fill="#d4d0c8"/><rect x="10" y="9" width="1" height="1" fill="#fff"/><rect x="2" y="10" width="2" height="1" fill="#fff"/><rect x="4" y="10" width="4" height="1" fill="#d4d0c8"/><rect x="8" y="10" width="2" height="1" fill="#fff"/><rect x="4" y="11" width="4" height="1" fill="#fff"/></svg>
<svg style="left:218px;top:492px" width="12" height="12" shape-rendering="crispEdges"><rect x="4" y="0" width="4" height="1" fill="#808080"/><rect x="2" y="1" width="2" height="1" fill="#808080"/><rect x="4" y="1" width="4" height="1" fill="#404040"/><rect x="8" y="1" width="2" height="1" fill="#808080"/><rect x="1" y="2" width="1" height="1" fill="#808080"/><rect x="2" y="2" width="2" height="1" fill="#404040"/><rect x="4" y="2" width="4" height="1" fill="#fff"/><rect x="8" y="2" width="2" height="1" fill="#404040"/><rect x="10" y="2" width="1" height="1" fill="#fff"/><rect x="1" y="3" width="1" height="1" fill="#808080"/><rect x="2" y="3" width="1" height="1" fill="#404040"/><rect x="3" y="3" width="6" height="1" fill="#fff"/><rect x="9" y="3" width="1" height="1" fill="#d4d0c8"/><rect x="10" y="3" width="1" height="1" fill="#fff"/><rect x="0" y="4" width="1" height="1" fill="#808080"/><rect x="1" y="4" width="1" height="1" fill="#404040"/><rect x="2" y="4" width="3" height="1" fill="#fff"/><rect x="5" y="4" width="2" height="1" fill="#000"/><rect x="7" y="4" width="3" height="1" fill="#fff"/><rect x="10" y="4" width="1" height="1" fill="#d4d0c8"/><rect x="11" y="4" width="1" height="1" fill="#fff"/><rect x="0" y="5" width="1" height="1" fill="#808080"/><rect x="1" y="5" width="1" height="1" fill="#404040"/><rect x="2" y="5" width="2" height="1" fill="#fff"/><rect x="4" y="5" width="4" height="1" fill="#000"/><rect x="8" y="5" width="2" height="1" fill="#fff"/><rect x="10" y="5" width="1" height="1" fill="#d4d0c8"/><rect x="11" y="5" width="1" height="1" fill="#fff"/><rect x="0" y="6" width="1" height="1" fill="#808080"/><rect x="1" y="6" width="1" height="1" fill="#404040"/><rect x="2" y="6" width="2" height="1" fill="#fff"/><rect x="4" y="6" width="4" height="1" fill="#000"/><rect x="8" y="6" width="2" height="1" fill="#fff"/><rect x="10" y="6" width="1" height="1" fill="#d4d0c8"/><rect x="11" y="6" width="1" height="1" fill="#fff"/><rect x="0" y="7" width="1" height="1" fill="#808080"/><rect x="1" y="7" width="1" height="1" fill="#404040"/><rect x="2" y="7" width="3" height="1" fill="#fff"/><rect x="5" y="7" width="2" height="1" fill="#000"/><rect x="7" y="7" width="3" height="1" fill="#fff"/><rect x="10" y="7" width="1" height="1" fill="#d4d0c8"/><rect x="11" y="7" width="1" height="1" fill="#fff"/><rect x="1" y="8" width="1" height="1" fill="#808080"/><rect x="2" y="8" width="1" height="1" fill="#404040"/><rect x="3" y="8" width="6" height="1" fill="#fff"/><rect x="9" y="8" width="1" height="1" fill="#d4d0c8"/><rect x="10" y="8" width="1" height="1" fill="#fff"/><rect x="1" y="9" width="1" height="1" fill="#fff"/><rect x="2" y="9" width="2" height="1" fill="#d4d0c8"/><rect x="4" y="9" width="4" height="1" fill="#fff"/><rect x="8" y="9" width="2" height="1" fill="#d4d0c8"/><rect x="10" y="9" width="1" height="1" fill="#fff"/><rect x="2" y="10" width="2" height="1" fill="#fff"/><rect x="4" y="10" width="4" height="1" fill="#d4d0c8"/><rect x="8" y="10" width="2" height="1" fill="#fff"/><rect x="4" y="11" width="4" height="1" fill="#fff"/></svg>
<div class="t" style="left:236px;top:477px;">По табельному номеру</div>
<div class="t" style="left:236px;top:492px;">По фамилии</div>
<div class="sunk" style="left:217px;top:510px;width:129px;height:21px"></div>
<div class="t" style="left:221px;top:514px;font-weight:bold;letter-spacing:0.5px">Малах</div>
<div class="btn" style="left:349px;top:509px;width:25px;height:22px"></div>
<svg style="left:353px;top:511px" width="16" height="17"><circle cx="8" cy="8.5" r="7.5" fill="#eeea70"/><path d="M5.2 6.2 C5.2 2.8 10.8 2.8 10.8 6 C10.8 8 8.2 8.3 8.2 10.5" stroke="#e00000" stroke-width="2.6" fill="none"/><rect x="6.8" y="12" width="2.8" height="2.6" fill="#e00000"/></svg>
<div class="dlg" style="left:385px;top:139px;width:545px;height:389px"></div>
<div class="title" style="left:388px;top:142px;width:538px;height:18px"></div>
<svg style="left:390px;top:143px" width="16" height="16" viewBox="0 0 16 16"><path d="M9.5 1.5v2 M5 13.5 L4 14.5 M7 12.5v2" stroke="#000" stroke-width="1.6" fill="none"/><path d="M11 4.5 C9 3 5 3 5 5.5 C5 8 11 7 11 10 C11 12.5 6.5 13 4.5 11.5" stroke="#000" stroke-width="3.6" fill="none" stroke-linecap="round"/><path d="M11 4.5 C9 3 5 3 5 5.5 C5 8 11 7 11 10 C11 12.5 6.5 13 4.5 11.5 M8 2v12" stroke="#f8b030" stroke-width="2.2" fill="none" stroke-linecap="round"/></svg>
<div class="tt" style="left:407px;top:145px;letter-spacing:0.6px">Зарплата ИП&nbsp;&nbsp;"Кадран" [Заполнение данных]</div>
<div class="btn" style="left:909px;top:144px;width:16px;height:14px"></div>
<svg style="left:909px;top:144px" width="16" height="14"><path d="M4.5 3.5 L11.5 10.5 M11.5 3.5 L4.5 10.5" stroke="#000" stroke-width="1.6"/></svg>
<div class="thin" style="left:388px;top:161px;width:538px;height:28px"></div>
<div class="t" style="left:397px;top:170px;font-weight:bold;color:#0000ff;letter-spacing:0.5px">35</div>
<div class="t" style="left:452px;top:170px;font-weight:bold;letter-spacing:0.5px">Малахова</div>
<div class="t" style="left:572px;top:170px;font-weight:bold;letter-spacing:0.5px">Анна</div>
<div class="t" style="left:661px;top:170px;font-weight:bold;letter-spacing:0.5px">Валерьевна</div>
<div class="t" style="left:794px;top:170px;font-weight:bold;letter-spacing:0.5px">секретарь</div>
<div class="btn" style="left:876px;top:164px;width:23px;height:22px"></div>
<div class="btn" style="left:900px;top:164px;width:23px;height:22px"></div>
<svg style="left:880px;top:167px" width="13" height="16" shape-rendering="crispEdges"><rect x="2" y="0" width="1" height="1" fill="#000"/><rect x="4" y="0" width="1" height="1" fill="#000"/><rect x="6" y="0" width="1" height="1" fill="#000"/><rect x="8" y="0" width="1" height="1" fill="#000"/><rect x="10" y="0" width="1" height="1" fill="#000"/><rect x="1" y="1" width="3" height="1" fill="#000"/><rect x="4" y="1" width="1" height="1" fill="#fff"/><rect x="5" y="1" width="1" height="1" fill="#000"/><rect x="6" y="1" width="1" height="1" fill="#fff"/><rect x="7" y="1" width="1" height="1" fill="#000"/><rect x="8" y="1" width="1" height="1" fill="#fff"/><rect x="9" y="1" width="1" height="1" fill="#000"/><rect x="10" y="1" width="1" height="1" fill="#fff"/><rect x="11" y="1" width="1" height="1" fill="#000"/><rect x="0" y="2" width="1" height="1" fill="#000"/><rect x="1" y="2" width="1" height="1" fill="#fff"/><rect x="2" y="2" width="2" height="1" fill="#000"/><rect x="4" y="2" width="1" height="1" fill="#fff"/><rect x="5" y="2" width="1" height="1" fill="#000"/><rect x="6" y="2" width="1" height="1" fill="#fff"/><rect x="7" y="2" width="1" height="1" fill="#000"/><rect x="8" y="2" width="1" height="1" fill="#fff"/><rect x="9" y="2" width="1" height="1" fill="#000"/><rect x="10" y="2" width="1" height="1" fill="#fff"/><rect x="11" y="2" width="2" height="1" fill="#000"/><rect x="0" y="3" width="1" height="1" fill="#000"/><rect x="1" y="3" width="1" height="1" fill="#fff"/><rect x="2" y="3" width="1" height="1" fill="#000"/><rect x="3" y="3" width="9" height="1" fill="#fff"/><rect x="12" y="3" width="1" height="1" fill="#000"/><rect x="0" y="4" width="1" height="1" fill="#000"/><rect x="1" y="4" width="1" height="1" fill="#fff"/><rect x="2" y="4" width="1" height="1" fill="#000"/><rect x="3" y="4" width="9" height="1" fill="#fff"/><rect x="12" y="4" width="1" height="1" fill="#000"/><rect x="0" y="5" width="1" height="1" fill="#000"/><rect x="1" y="5" width="1" height="1" fill="#fff"/><rect x="2" y="5" width="1" height="1" fill="#000"/><rect x="3" y="5" width="1" height="1" fill="#fff"/><rect x="4" y="5" width="2" height="1" fill="#008080"/><rect x="6" y="5" width="1" height="1" fill="#fff"/><rect x="7" y="5" width="1" height="1" fill="#008080"/><rect x="8" y="5" width="1" height="1" fill="#fff"/><rect x="9" y="5" width="2" height="1" fill="#008080"/><rect x="11" y="5" width="1" height="1" fill="#fff"/><rect x="12" y="5" width="1" height="1" fill="#000"/><rect x="0" y="6" width="1" height="1" fill="#000"/><rect x="1" y="6" width="1" height="1" fill="#fff"/><rect x="2" y="6" width="1" height="1" fill="#000"/><rect x="3" y="6" width="1" height="1" fill="#fff"/><rect x="4" y="6" width="2" height="1" fill="#008080"/><rect x="6" y="6" width="1" height="1" fill="#fff"/><rect x="7" y="6" width="1" height="1" fill="#008080"/><rect x="8" y="6" width="1" height="1" fill="#fff"/><rect x="9" y="6" width="2" height="1" fill="#008080"/><rect x="11" y="6" width="1" height="1" fill="#fff"/><rect x="12" y="6" width="1" height="1" fill="#000"/><rect x="0" y="7" width="1" height="1" fill="#000"/><rect x="1" y="7" width="1" height="1" fill="#fff"/><rect x="2" y="7" width="1" height="1" fill="#000"/><rect x="3" y="7" width="9" height="1" fill="#fff"/><rect x="12" y="7" width="1" height="1" fill="#000"/><rect x="0" y="8" width="1" height="1" fill="#000"/><rect x="1" y="8" width="1" height="1" fill="#fff"/><rect x="2" y="8" width="1" height="1" fill="#000"/><rect x="3" y="8" width="1" height="1" fill="#fff"/><rect x="4" y="8" width="2" height="1" fill="#008080"/><rect x="6" y="8" width="1" height="1" fill="#fff"/><rect x="7" y="8" width="1" height="1" fill="#008080"/><rect x="8" y="8" width="1" height="1" fill="#fff"/><rect x="9" y="8" width="2" height="1" fill="#008080"/><rect x="11" y="8" width="1" height="1" fill="#fff"/><rect x="12" y="8" width="1" height="1" fill="#000"/><rect x="0" y="9" width="1" height="1" fill="#000"/><rect x="1" y="9" width="1" height="1" fill="#fff"/><rect x="2" y="9" width="1" height="1" fill="#000"/><rect x="3" y="9" width="1" height="1" fill="#fff"/><rect x="4" y="9" width="2" height="1" fill="#008080"/><rect x="6" y="9" width="1" height="1" fill="#fff"/><rect x="7" y="9" width="1" height="1" fill="#008080"/><rect x="8" y="9" width="1" height="1" fill="#fff"/><rect x="9" y="9" width="2" height="1" fill="#008080"/><rect x="11" y="9" width="1" height="1" fill="#fff"/><rect x="12" y="9" width="1" height="1" fill="#000"/><rect x="0" y="10" width="1" height="1" fill="#000"/><rect x="1" y="10" width="1" height="1" fill="#fff"/><rect x="2" y="10" width="1" height="1" fill="#000"/><rect x="3" y="10" width="9" height="1" fill="#fff"/><rect x="12" y="10" width="1" height="1" fill="#000"/><rect x="0" y="11" width="1" height="1" fill="#000"/><rect x="1" y="11" width="1" height="1" fill="#fff"/><rect x="2" y="11" width="1" height="1" fill="#000"/><rect x="3" y="11" width="1" height="1" fill="#fff"/><rect x="4" y="11" width="2" height="1" fill="#008080"/><rect x="6" y="11" width="1" height="1" fill="#fff"/><rect x="7" y="11" width="1" height="1" fill="#008080"/><rect x="8" y="11" width="1" height="1" fill="#fff"/><rect x="9" y="11" width="2" height="1" fill="#008080"/><rect x="11" y="11" width="1" height="1" fill="#fff"/><rect x="12" y="11" width="1" height="1" fill="#000"/><rect x="0" y="12" width="1" height="1" fill="#000"/><rect x="1" y="12" width="1" height="1" fill="#fff"/><rect x="2" y="12" width="1" height="1" fill="#000"/><rect x="3" y="12" width="1" height="1" fill="#fff"/><rect x="4" y="12" width="2" height="1" fill="#008080"/><rect x="6" y="12" width="1" height="1" fill="#fff"/><rect x="7" y="12" width="1" height="1" fill="#008080"/><rect x="8" y="12" width="1" height="1" fill="#fff"/><rect x="9" y="12" width="2" height="1" fill="#008080"/><rect x="11" y="12" width="1" height="1" fill="#fff"/><rect x="12" y="12" width="1" height="1" fill="#000"/><rect x="0" y="13" width="1" height="1" fill="#000"/><rect x="1" y="13" width="1" height="1" fill="#fff"/><rect x="2" y="13" width="1" height="1" fill="#000"/><rect x="3" y="13" width="1" height="1" fill="#fff"/><rect x="4" y="13" width="2" height="1" fill="#008080"/><rect x="6" y="13" width="1" height="1" fill="#fff"/><rect x="7" y="13" width="1" height="1" fill="#008080"/><rect x="8" y="13" width="1" height="1" fill="#fff"/><rect x="9" y="13" width="2" height="1" fill="#008080"/><rect x="11" y="13" width="1" height="1" fill="#fff"/><rect x="12" y="13" width="1" height="1" fill="#000"/><rect x="0" y="14" width="3" height="1" fill="#000"/><rect x="3" y="14" width="9" height="1" fill="#fff"/><rect x="12" y="14" width="1" height="1" fill="#000"/><rect x="3" y="15" width="10" height="1" fill="#000"/></svg>
<svg style="left:903px;top:166px" width="18" height="17" shape-rendering="crispEdges"><rect x="3" y="1" width="2" height="1" fill="#c00000"/><rect x="7" y="1" width="8" height="1" fill="#000"/><rect x="3" y="2" width="2" height="1" fill="#c00000"/><rect x="5" y="2" width="1" height="1" fill="#000"/><rect x="7" y="2" width="1" height="1" fill="#000"/><rect x="8" y="2" width="6" height="1" fill="#fff"/><rect x="14" y="2" width="2" height="1" fill="#000"/><rect x="4" y="3" width="1" height="1" fill="#000"/><rect x="5" y="3" width="2" height="1" fill="#f0f080"/><rect x="7" y="3" width="1" height="1" fill="#000"/><rect x="8" y="3" width="6" height="1" fill="#fff"/><rect x="14" y="3" width="1" height="1" fill="#000"/><rect x="15" y="3" width="1" height="1" fill="#fff"/><rect x="16" y="3" width="1" height="1" fill="#000"/><rect x="5" y="4" width="1" height="1" fill="#000"/><rect x="6" y="4" width="2" height="1" fill="#f0f080"/><rect x="8" y="4" width="1" height="1" fill="#fff"/><rect x="9" y="4" width="2" height="1" fill="#000"/><rect x="11" y="4" width="3" height="1" fill="#fff"/><rect x="14" y="4" width="4" height="1" fill="#000"/><rect x="6" y="5" width="1" height="1" fill="#000"/><rect x="7" y="5" width="2" height="1" fill="#f0f080"/><rect x="9" y="5" width="8" height="1" fill="#fff"/><rect x="17" y="5" width="1" height="1" fill="#000"/><rect x="7" y="6" width="1" height="1" fill="#000"/><rect x="8" y="6" width="2" height="1" fill="#f0f080"/><rect x="10" y="6" width="7" height="1" fill="#fff"/><rect x="17" y="6" width="1" height="1" fill="#000"/><rect x="2" y="7" width="7" height="1" fill="#000"/><rect x="9" y="7" width="2" height="1" fill="#f0f080"/><rect x="11" y="7" width="2" height="1" fill="#fff"/><rect x="13" y="7" width="2" height="1" fill="#000"/><rect x="15" y="7" width="2" height="1" fill="#fff"/><rect x="17" y="7" width="1" height="1" fill="#000"/><rect x="1" y="8" width="1" height="1" fill="#000"/><rect x="2" y="8" width="1" height="1" fill="#40c0c0"/><rect x="3" y="8" width="1" height="1" fill="#000"/><rect x="4" y="8" width="8" height="1" fill="#f0f080"/><rect x="12" y="8" width="5" height="1" fill="#fff"/><rect x="17" y="8" width="1" height="1" fill="#000"/><rect x="1" y="9" width="1" height="1" fill="#000"/><rect x="2" y="9" width="1" height="1" fill="#40c0c0"/><rect x="3" y="9" width="1" height="1" fill="#000"/><rect x="4" y="9" width="3" height="1" fill="#f0f080"/><rect x="7" y="9" width="4" height="1" fill="#000"/><rect x="11" y="9" width="3" height="1" fill="#f0f080"/><rect x="14" y="9" width="3" height="1" fill="#fff"/><rect x="17" y="9" width="1" height="1" fill="#000"/><rect x="1" y="10" width="1" height="1" fill="#000"/><rect x="2" y="10" width="1" height="1" fill="#40c0c0"/><rect x="3" y="10" width="1" height="1" fill="#000"/><rect x="4" y="10" width="10" height="1" fill="#f0f080"/><rect x="14" y="10" width="3" height="1" fill="#fff"/><rect x="17" y="10" width="1" height="1" fill="#000"/><rect x="1" y="11" width="1" height="1" fill="#000"/><rect x="2" y="11" width="1" height="1" fill="#40c0c0"/><rect x="3" y="11" width="1" height="1" fill="#000"/><rect x="4" y="11" width="3" height="1" fill="#f0f080"/><rect x="7" y="11" width="6" height="1" fill="#000"/><rect x="13" y="11" width="4" height="1" fill="#fff"/><rect x="17" y="11" width="1" height="1" fill="#000"/><rect x="1" y="12" width="1" height="1" fill="#000"/><rect x="2" y="12" width="1" height="1" fill="#40c0c0"/><rect x="3" y="12" width="1" height="1" fill="#000"/><rect x="4" y="12" width="9" height="1" fill="#f0f080"/><rect x="13" y="12" width="1" height="1" fill="#fff"/><rect x="14" y="12" width="2" height="1" fill="#000"/><rect x="16" y="12" width="1" height="1" fill="#fff"/><rect x="17" y="12" width="1" height="1" fill="#000"/><rect x="1" y="13" width="1" height="1" fill="#000"/><rect x="2" y="13" width="1" height="1" fill="#40c0c0"/><rect x="3" y="13" width="1" height="1" fill="#000"/><rect x="4" y="13" width="3" height="1" fill="#f0f080"/><rect x="7" y="13" width="6" height="1" fill="#000"/><rect x="13" y="13" width="4" height="1" fill="#fff"/><rect x="17" y="13" width="1" height="1" fill="#000"/><rect x="2" y="14" width="2" height="1" fill="#000"/><rect x="4" y="14" width="7" height="1" fill="#f0f080"/><rect x="11" y="14" width="1" height="1" fill="#000"/><rect x="12" y="14" width="1" height="1" fill="#fff"/><rect x="13" y="14" width="5" height="1" fill="#000"/><rect x="3" y="15" width="9" height="1" fill="#000"/><rect x="12" y="15" width="5" height="1" fill="#fff"/><rect x="17" y="15" width="1" height="1" fill="#000"/><rect x="7" y="16" width="11" height="1" fill="#000"/></svg>
<div class="tabp" style="left:388px;top:190px;width:539px;height:284px"></div>
<div class="grp1" style="left:392px;top:201px;width:185px;height:243px"></div>
<div class="grp2" style="left:393px;top:202px;width:185px;height:243px"></div>
<div class="t" style="left:400px;top:215px;">Норма часов</div>
<div class="edit" style="left:496px;top:210px;width:71px;height:20px"></div>
<div class="t" style="right:377px;top:214px;font-weight:bold;font-size:12px;letter-spacing:0.3px;">160</div>
<div class="t" style="left:400px;top:239px;">Оклад</div>
<div class="edit" style="left:496px;top:234px;width:71px;height:20px"></div>
<div class="t" style="right:377px;top:238px;font-weight:bold;font-size:12px;letter-spacing:0.3px;">312927</div>
<div class="t" style="left:400px;top:263px;">Отработано</div>
<div class="edit" style="left:527px;top:257px;width:40px;height:19px"></div>
<div class="t" style="right:377px;top:260px;font-weight:bold;font-size:12px;letter-spacing:0.3px;">160</div>
<div class="t" style="left:400px;top:285px;">Ночные</div>
<div class="edit" style="left:527px;top:279px;width:40px;height:19px"></div>
<div class="t" style="right:377px;top:282px;font-weight:bold;font-size:12px;letter-spacing:0.3px;">0</div>
<div class="t" style="left:400px;top:309px;">Вечерние</div>
<div class="edit" style="left:527px;top:303px;width:40px;height:19px"></div>
<div class="t" style="right:377px;top:306px;font-weight:bold;font-size:12px;letter-spacing:0.3px;">20</div>
<div class="t" style="left:400px;top:333px;">Часы переработки</div>
<div class="edit" style="left:527px;top:327px;width:40px;height:19px"></div>
<div class="t" style="right:377px;top:330px;font-weight:bold;font-size:12px;letter-spacing:0.3px;">0</div>
<div class="t" style="left:400px;top:357px;">Вредные условия</div>
<div class="edit" style="left:527px;top:351px;width:40px;height:19px"></div>
<div class="t" style="right:377px;top:354px;font-weight:bold;font-size:12px;letter-spacing:0.3px;">0</div>
<div class="t" style="left:400px;top:381px;">Выходные (праздники)</div>
<div class="edit" style="left:527px;top:375px;width:40px;height:19px"></div>
<div class="t" style="right:377px;top:378px;font-weight:bold;font-size:12px;letter-spacing:0.3px;">0</div>
<div class="t" style="left:400px;top:405px;">Совмещение</div>
<div class="edit" style="left:472px;top:399px;width:31px;height:19px"></div>
<div class="t" style="right:441px;top:402px;font-weight:bold;font-size:12px;letter-spacing:0.3px;">0</div>
<div class="edit" style="left:504px;top:399px;width:63px;height:19px"></div>
<div class="t" style="right:377px;top:402px;font-weight:bold;font-size:12px;letter-spacing:0.3px;">0</div>
<div class="t" style="left:400px;top:429px;">Двойная оплата выходных</div>
<div class="edit" style="left:555px;top:428px;width:13px;height:13px"></div>
<div class="t" style="left:400px;top:452px;">Возвращать подоходный</div>
<div class="edit" style="left:555px;top:452px;width:13px;height:13px"></div>
<div class="grp1" style="left:584px;top:201px;width:165px;height:54px"></div>
<div class="grp2" style="left:585px;top:202px;width:165px;height:54px"></div>
<div class="t" style="left:592px;top:196px;background:#d4d0c8;padding:0 1px 0 1px">Детское пособие</div>
<div class="t" style="left:591px;top:215px;">Ставка пособия</div>
<div class="edit" style="left:685px;top:208px;width:60px;height:20px"></div>
<div class="t" style="right:199px;top:212px;font-weight:bold;font-size:12px;letter-spacing:0.3px;">0</div>
<div class="t" style="left:591px;top:239px;">Количество детей</div>
<div class="edit" style="left:685px;top:232px;width:60px;height:20px"></div>
<div class="t" style="right:199px;top:236px;font-weight:bold;font-size:12px;letter-spacing:0.3px;">1</div>
<div class="grp1" style="left:584px;top:264px;width:165px;height:119px"></div>
<div class="grp2" style="left:585px;top:265px;width:165px;height:119px"></div>
<div class="t" style="left:592px;top:259px;background:#d4d0c8;padding:0 1px 0 1px">Отпуск</div>
<div class="t" style="left:591px;top:277px;">Дни отпуска</div>
<div class="edit" style="left:685px;top:270px;width:60px;height:20px"></div>
<div class="t" style="right:199px;top:274px;font-weight:bold;font-size:12px;letter-spacing:0.3px;">0</div>
<div class="t" style="left:591px;top:299px;">За счет бюджета</div>
<div class="edit" style="left:685px;top:292px;width:60px;height:20px"></div>
<div class="t" style="right:199px;top:296px;font-weight:bold;font-size:12px;letter-spacing:0.3px;">0</div>
<div class="t" style="left:591px;top:321px;">Сумма тек. м-ца</div>
<div class="edit" style="left:685px;top:314px;width:60px;height:20px"></div>
<div class="t" style="right:199px;top:318px;font-weight:bold;font-size:12px;letter-spacing:0.3px;">0</div>
<div class="t" style="left:591px;top:343px;">Сумма буд. м-ца</div>
<div class="edit" style="left:685px;top:336px;width:60px;height:20px"></div>
<div class="t" style="right:199px;top:340px;font-weight:bold;font-size:12px;letter-spacing:0.3px;">0</div>
<div class="t" style="left:591px;top:364px;">Буд. месяц по мин. ставке</div>
<div class="edit" style="left:732px;top:364px;width:13px;height:13px"></div>
<svg style="left:732px;top:364px" width="13" height="13"><path d="M3 5.5 L5 8 L10 3" stroke="#000" stroke-width="2" fill="none"/></svg>
<div class="grp1" style="left:584px;top:393px;width:165px;height:75px"></div>
<div class="grp2" style="left:585px;top:394px;width:165px;height:75px"></div>
<div class="t" style="left:592px;top:388px;background:#d4d0c8;padding:0 1px 0 1px">Компенсация за отпуск</div>
<div class="t" style="left:591px;top:407px;">Дни отпуска</div>
<div class="edit" style="left:685px;top:400px;width:60px;height:20px"></div>
<div class="t" style="right:199px;top:404px;font-weight:bold;font-size:12px;letter-spacing:0.3px;">0</div>
<div class="t" style="left:591px;top:429px;">За счет бюджета</div>
<div class="edit" style="left:685px;top:422px;width:60px;height:20px"></div>
<div class="t" style="right:199px;top:426px;font-weight:bold;font-size:12px;letter-spacing:0.3px;">0</div>
<div class="t" style="left:591px;top:451px;">Сумма</div>
<div class="edit" style="left:685px;top:444px;width:60px;height:20px"></div>
<div class="t" style="right:199px;top:448px;font-weight:bold;font-size:12px;letter-spacing:0.3px;">0</div>
<div class="grp1" style="left:756px;top:201px;width:163px;height:54px"></div>
<div class="grp2" style="left:757px;top:202px;width:163px;height:54px"></div>
<div class="t" style="left:764px;top:196px;background:#d4d0c8;padding:0 1px 0 1px">Больничный на ребенка</div>
<div class="t" style="left:763px;top:215px;">Дни</div>
<div class="edit" style="left:855px;top:208px;width:60px;height:20px"></div>
<div class="t" style="right:29px;top:212px;font-weight:bold;font-size:12px;letter-spacing:0.3px;">0</div>
<div class="t" style="left:763px;top:237px;">Сумма</div>
<div class="edit" style="left:855px;top:230px;width:60px;height:20px"></div>
<div class="t" style="right:29px;top:234px;font-weight:bold;font-size:12px;letter-spacing:0.3px;">0</div>
<div class="grp1" style="left:756px;top:264px;width:163px;height:53px"></div>
<div class="grp2" style="left:757px;top:265px;width:163px;height:53px"></div>
<div class="t" style="left:764px;top:259px;background:#d4d0c8;padding:0 1px 0 1px">Больничный</div>
<div class="t" style="left:763px;top:277px;">Дни</div>
<div class="edit" style="left:855px;top:270px;width:60px;height:20px"></div>
<div class="t" style="right:29px;top:274px;font-weight:bold;font-size:12px;letter-spacing:0.3px;">0</div>
<div class="t" style="left:763px;top:299px;">Сумма</div>
<div class="edit" style="left:855px;top:292px;width:60px;height:20px"></div>
<div class="t" style="right:29px;top:296px;font-weight:bold;font-size:12px;letter-spacing:0.3px;">0</div>
<div class="grp1" style="left:756px;top:327px;width:163px;height:53px"></div>
<div class="grp2" style="left:757px;top:328px;width:163px;height:53px"></div>
<div class="t" style="left:764px;top:322px;background:#d4d0c8;padding:0 1px 0 1px">Прошлый месяц</div>
<div class="t" style="left:763px;top:340px;">Остаток прош. м-ца</div>
<div class="edit" style="left:866px;top:333px;width:51px;height:20px"></div>
<div class="t" style="right:27px;top:337px;font-weight:bold;font-size:12px;letter-spacing:0.3px;">0</div>
<div class="t" style="left:763px;top:361px;">Долг прош. месяца</div>
<div class="edit" style="left:866px;top:355px;width:51px;height:20px"></div>
<div class="t" style="right:27px;top:359px;font-weight:bold;font-size:12px;letter-spacing:0.3px;">0</div>
<div class="grp1" style="left:756px;top:389px;width:163px;height:54px"></div>
<div class="grp2" style="left:757px;top:390px;width:163px;height:54px"></div>
<div class="t" style="left:763px;top:402px;">Премия</div>
<div class="edit" style="left:855px;top:396px;width:60px;height:20px"></div>
<div class="t" style="right:29px;top:400px;font-weight:bold;font-size:12px;letter-spacing:0.3px;">50000</div>
<div class="t" style="left:763px;top:425px;">Мат. помощь</div>
<div class="edit" style="left:855px;top:418px;width:60px;height:20px"></div>
<div class="t" style="right:29px;top:422px;font-weight:bold;font-size:12px;letter-spacing:0.3px;">0</div>
<div class="t" style="left:761px;top:452px;">КТУ</div>
<div class="edit" style="left:880px;top:447px;width:39px;height:20px"></div>
<div class="t" style="right:25px;top:451px;font-weight:bold;font-size:12px;letter-spacing:0.3px;">1.0</div>
<div class="tab" style="left:486px;top:474px;width:91px;height:19px"></div>
<div class="tab" style="left:577px;top:474px;width:170px;height:19px"></div>
<div class="tab" style="left:747px;top:474px;width:103px;height:19px"></div>
<div style="left:486px;top:474px;width:1px;height:18px;background:#404040"></div>
<div class="tabsel" style="left:388px;top:472px;width:98px;height:23px"></div>
<svg style="left:396px;top:477px" width="15" height="15"><path d="M4.5 0 H10.5 L15 4.5 V10.5 L10.5 15 H4.5 L0 10.5 V4.5 Z" fill="#ff9933"/><rect x="6" y="3" width="3" height="9" fill="#fff"/><rect x="3" y="6" width="9" height="3" fill="#fff"/></svg>
<svg style="left:491px;top:475px" width="15" height="15"><path d="M4.5 0 H10.5 L15 4.5 V10.5 L10.5 15 H4.5 L0 10.5 V4.5 Z" fill="#ff9933"/><rect x="3" y="6" width="9" height="3" fill="#fff"/></svg>
<svg style="left:583px;top:475px" width="15" height="15"><path d="M4.5 0 H10.5 L15 4.5 V10.5 L10.5 15 H4.5 L0 10.5 V4.5 Z" fill="#ff9933"/><rect x="7" y="4" width="6" height="2" fill="#fff"/><rect x="4" y="7" width="2" height="6" fill="#fff"/><rect x="2" y="9" width="6" height="2" fill="#fff"/></svg>
<svg style="left:752px;top:478px" width="17" height="12" shape-rendering="crispEdges"><rect x="2" y="0" width="4" height="1" fill="#ffa000"/><rect x="7" y="0" width="1" height="1" fill="#000"/><rect x="2" y="1" width="3" height="1" fill="#80ffff"/><rect x="6" y="1" width="2" height="1" fill="#000"/><rect x="9" y="1" width="7" height="1" fill="#000"/><rect x="1" y="2" width="1" height="1" fill="#000"/><rect x="2" y="2" width="2" height="1" fill="#80ffff"/><rect x="6" y="2" width="2" height="1" fill="#000"/><rect x="8" y="2" width="7" height="1" fill="#ffcc00"/><rect x="15" y="2" width="1" height="1" fill="#000"/><rect x="1" y="3" width="1" height="1" fill="#000"/><rect x="2" y="3" width="1" height="1" fill="#80ffff"/><rect x="3" y="3" width="1" height="1" fill="#ff4000"/><rect x="6" y="3" width="2" height="1" fill="#000"/><rect x="8" y="3" width="7" height="1" fill="#ffcc00"/><rect x="15" y="3" width="1" height="1" fill="#000"/><rect x="1" y="4" width="1" height="1" fill="#000"/><rect x="2" y="4" width="1" height="1" fill="#d0a060"/><rect x="3" y="4" width="2" height="1" fill="#ff4000"/><rect x="6" y="4" width="2" height="1" fill="#000"/><rect x="8" y="4" width="7" height="1" fill="#ffcc00"/><rect x="15" y="4" width="1" height="1" fill="#000"/><rect x="1" y="5" width="1" height="1" fill="#000"/><rect x="2" y="5" width="4" height="1" fill="#d0a060"/><rect x="6" y="5" width="9" height="1" fill="#ffcc00"/><rect x="15" y="5" width="1" height="1" fill="#000"/><rect x="1" y="6" width="1" height="1" fill="#000"/><rect x="2" y="6" width="2" height="1" fill="#d0a060"/><rect x="4" y="6" width="11" height="1" fill="#ffcc00"/><rect x="15" y="6" width="1" height="1" fill="#000"/><rect x="0" y="7" width="3" height="1" fill="#ffa000"/><rect x="3" y="7" width="3" height="1" fill="#ffcc00"/><rect x="6" y="7" width="2" height="1" fill="#ffa000"/><rect x="8" y="7" width="4" height="1" fill="#ffcc00"/><rect x="12" y="7" width="3" height="1" fill="#ffa000"/><rect x="15" y="7" width="1" height="1" fill="#ffcc00"/><rect x="16" y="7" width="1" height="1" fill="#000"/><rect x="2" y="8" width="4" height="1" fill="#000"/><rect x="10" y="8" width="4" height="1" fill="#000"/><rect x="1" y="9" width="2" height="1" fill="#000"/><rect x="3" y="9" width="2" height="1" fill="#c0c0c0"/><rect x="5" y="9" width="2" height="1" fill="#000"/><rect x="9" y="9" width="2" height="1" fill="#000"/><rect x="11" y="9" width="2" height="1" fill="#c0c0c0"/><rect x="13" y="9" width="2" height="1" fill="#000"/><rect x="1" y="10" width="2" height="1" fill="#000"/><rect x="3" y="10" width="2" height="1" fill="#c0c0c0"/><rect x="5" y="10" width="2" height="1" fill="#000"/><rect x="9" y="10" width="2" height="1" fill="#000"/><rect x="11" y="10" width="2" height="1" fill="#c0c0c0"/><rect x="13" y="10" width="2" height="1" fill="#000"/><rect x="2" y="11" width="4" height="1" fill="#000"/><rect x="10" y="11" width="4" height="1" fill="#000"/></svg>
<div class="t" style="left:418px;top:479px;">Начисления</div>
<div class="t" style="left:513px;top:477px;">Удержания</div>
<div class="t" style="left:605px;top:477px;">Дополнительные выплаты</div>
<div class="t" style="left:775px;top:477px;">Второй оклад</div>
<div class="thin" style="left:388px;top:495px;width:539px;height:30px"></div>
<div class="btn" style="left:390px;top:499px;width:76px;height:23px"></div>
<div class="t" style="left:404px;top:504px;">Закрыть</div>
<div class="btn" style="left:472px;top:499px;width:23px;height:23px"></div>
<div class="btn" style="left:512px;top:499px;width:23px;height:23px"></div>
<svg style="left:476px;top:502px" width="16" height="16"><circle cx="8" cy="7" r="6.5" fill="#ffff90"/><path d="M1 13 L3 6 H7 L8 7 L9 6 H13 L15 13 Z" fill="#fff" stroke="#000" stroke-width="1.2"/><path d="M0.5 14 H15.5 V15 H10 L8 16 L6 15 H0.5 Z" fill="#0000ff"/><path d="M5.3 4.3 C5.3 1 10.7 1 10.7 4 C10.7 6 8.3 6.5 8.3 8.5" stroke="#e00000" stroke-width="2.3" fill="none"/><rect x="7" y="9.5" width="2.6" height="2.3" fill="#e00000"/></svg>
<svg style="left:518px;top:502px" width="11" height="16" shape-rendering="crispEdges"><rect x="1" y="0" width="9" height="1" fill="#000"/><rect x="0" y="1" width="1" height="1" fill="#000"/><rect x="1" y="1" width="9" height="1" fill="#c0c0c0"/><rect x="10" y="1" width="1" height="1" fill="#000"/><rect x="0" y="2" width="1" height="1" fill="#000"/><rect x="1" y="2" width="1" height="1" fill="#c0c0c0"/><rect x="2" y="2" width="7" height="1" fill="#000"/><rect x="9" y="2" width="1" height="1" fill="#c0c0c0"/><rect x="10" y="2" width="1" height="1" fill="#000"/><rect x="0" y="3" width="1" height="1" fill="#000"/><rect x="1" y="3" width="1" height="1" fill="#c0c0c0"/><rect x="2" y="3" width="3" height="1" fill="#000"/><rect x="5" y="3" width="1" height="1" fill="#00c0a0"/><rect x="6" y="3" width="1" height="1" fill="#000"/><rect x="7" y="3" width="1" height="1" fill="#00c0a0"/><rect x="8" y="3" width="1" height="1" fill="#000"/><rect x="9" y="3" width="1" height="1" fill="#c0c0c0"/><rect x="10" y="3" width="1" height="1" fill="#000"/><rect x="0" y="4" width="1" height="1" fill="#000"/><rect x="1" y="4" width="1" height="1" fill="#c0c0c0"/><rect x="2" y="4" width="7" height="1" fill="#000"/><rect x="9" y="4" width="1" height="1" fill="#c0c0c0"/><rect x="10" y="4" width="1" height="1" fill="#000"/><rect x="0" y="5" width="1" height="1" fill="#000"/><rect x="1" y="5" width="9" height="1" fill="#c0c0c0"/><rect x="10" y="5" width="1" height="1" fill="#000"/><rect x="0" y="6" width="1" height="1" fill="#000"/><rect x="1" y="6" width="1" height="1" fill="#c0c0c0"/><rect x="2" y="6" width="1" height="1" fill="#000"/><rect x="3" y="6" width="1" height="1" fill="#c0c0c0"/><rect x="4" y="6" width="1" height="1" fill="#000"/><rect x="5" y="6" width="1" height="1" fill="#c0c0c0"/><rect x="6" y="6" width="1" height="1" fill="#000"/><rect x="7" y="6" width="1" height="1" fill="#c0c0c0"/><rect x="8" y="6" width="1" height="1" fill="#000"/><rect x="9" y="6" width="1" height="1" fill="#c0c0c0"/><rect x="10" y="6" width="1" height="1" fill="#000"/><rect x="0" y="7" width="1" height="1" fill="#000"/><rect x="1" y="7" width="9" height="1" fill="#c0c0c0"/><rect x="10" y="7" width="1" height="1" fill="#000"/><rect x="0" y="8" width="1" height="1" fill="#000"/><rect x="1" y="8" width="1" height="1" fill="#c0c0c0"/><rect x="2" y="8" width="1" height="1" fill="#000"/><rect x="3" y="8" width="1" height="1" fill="#c0c0c0"/><rect x="4" y="8" width="1" height="1" fill="#000"/><rect x="5" y="8" width="1" height="1" fill="#c0c0c0"/><rect x="6" y="8" width="1" height="1" fill="#000"/><rect x="7" y="8" width="1" height="1" fill="#c0c0c0"/><rect x="8" y="8" width="1" height="1" fill="#000"/><rect x="9" y="8" width="1" height="1" fill="#c0c0c0"/><rect x="10" y="8" width="1" height="1" fill="#000"/><rect x="0" y="9" width="1" height="1" fill="#000"/><rect x="1" y="9" width="9" height="1" fill="#c0c0c0"/><rect x="10" y="9" width="1" height="1" fill="#000"/><rect x="0" y="10" width="1" height="1" fill="#000"/><rect x="1" y="10" width="1" height="1" fill="#c0c0c0"/><rect x="2" y="10" width="1" height="1" fill="#000"/><rect x="3" y="10" width="1" height="1" fill="#c0c0c0"/><rect x="4" y="10" width="1" height="1" fill="#000"/><rect x="5" y="10" width="1" height="1" fill="#c0c0c0"/><rect x="6" y="10" width="1" height="1" fill="#000"/><rect x="7" y="10" width="1" height="1" fill="#c0c0c0"/><rect x="8" y="10" width="1" height="1" fill="#000"/><rect x="9" y="10" width="1" height="1" fill="#c0c0c0"/><rect x="10" y="10" width="1" height="1" fill="#000"/><rect x="0" y="11" width="1" height="1" fill="#000"/><rect x="1" y="11" width="9" height="1" fill="#c0c0c0"/><rect x="10" y="11" width="1" height="1" fill="#000"/><rect x="0" y="12" width="1" height="1" fill="#000"/><rect x="1" y="12" width="1" height="1" fill="#c0c0c0"/><rect x="2" y="12" width="1" height="1" fill="#000"/><rect x="3" y="12" width="1" height="1" fill="#c0c0c0"/><rect x="4" y="12" width="1" height="1" fill="#000"/><rect x="5" y="12" width="1" height="1" fill="#c0c0c0"/><rect x="6" y="12" width="3" height="1" fill="#ff0000"/><rect x="9" y="12" width="1" height="1" fill="#c0c0c0"/><rect x="10" y="12" width="1" height="1" fill="#000"/><rect x="0" y="13" width="1" height="1" fill="#000"/><rect x="1" y="13" width="9" height="1" fill="#c0c0c0"/><rect x="10" y="13" width="1" height="1" fill="#000"/><rect x="0" y="14" width="1" height="1" fill="#000"/><rect x="1" y="14" width="9" height="1" fill="#c0c0c0"/><rect x="10" y="14" width="1" height="1" fill="#000"/><rect x="1" y="15" width="9" height="1" fill="#000"/></svg>
<div class="btn" style="left:626px;top:499px;width:23px;height:23px"></div>
<div class="btn" style="left:674px;top:499px;width:23px;height:23px"></div>
<svg style="left:630px;top:502px" width="16" height="15"><path d="M0 7.5 L16 0 L10 7.5 Z" fill="#0000ff"/><path d="M0 7.5 L16 15 L10 7.5 Z" fill="#000080"/><rect x="0" y="7" width="16" height="1.3" fill="#ff0000"/></svg>
<svg style="left:678px;top:502px" width="16" height="15"><path d="M16 7.5 L0 0 L6 7.5 Z" fill="#0000ff"/><path d="M16 7.5 L0 15 L6 7.5 Z" fill="#000080"/><rect x="0" y="7" width="16" height="1.3" fill="#ff0000"/></svg>
<div class="t" style="left:710px;top:503px;">Скрывать уволенных</div>
<div class="edit" style="left:822px;top:502px;width:13px;height:13px"></div>
<svg style="left:822px;top:502px" width="13" height="13"><path d="M3 5.5 L5 8 L10 3" stroke="#000" stroke-width="2" fill="none"/></svg>
<div class="btn" style="left:845px;top:499px;width:75px;height:23px"></div>
<div class="t" style="left:856px;top:504px;">Сохранить</div>
</body></html>
